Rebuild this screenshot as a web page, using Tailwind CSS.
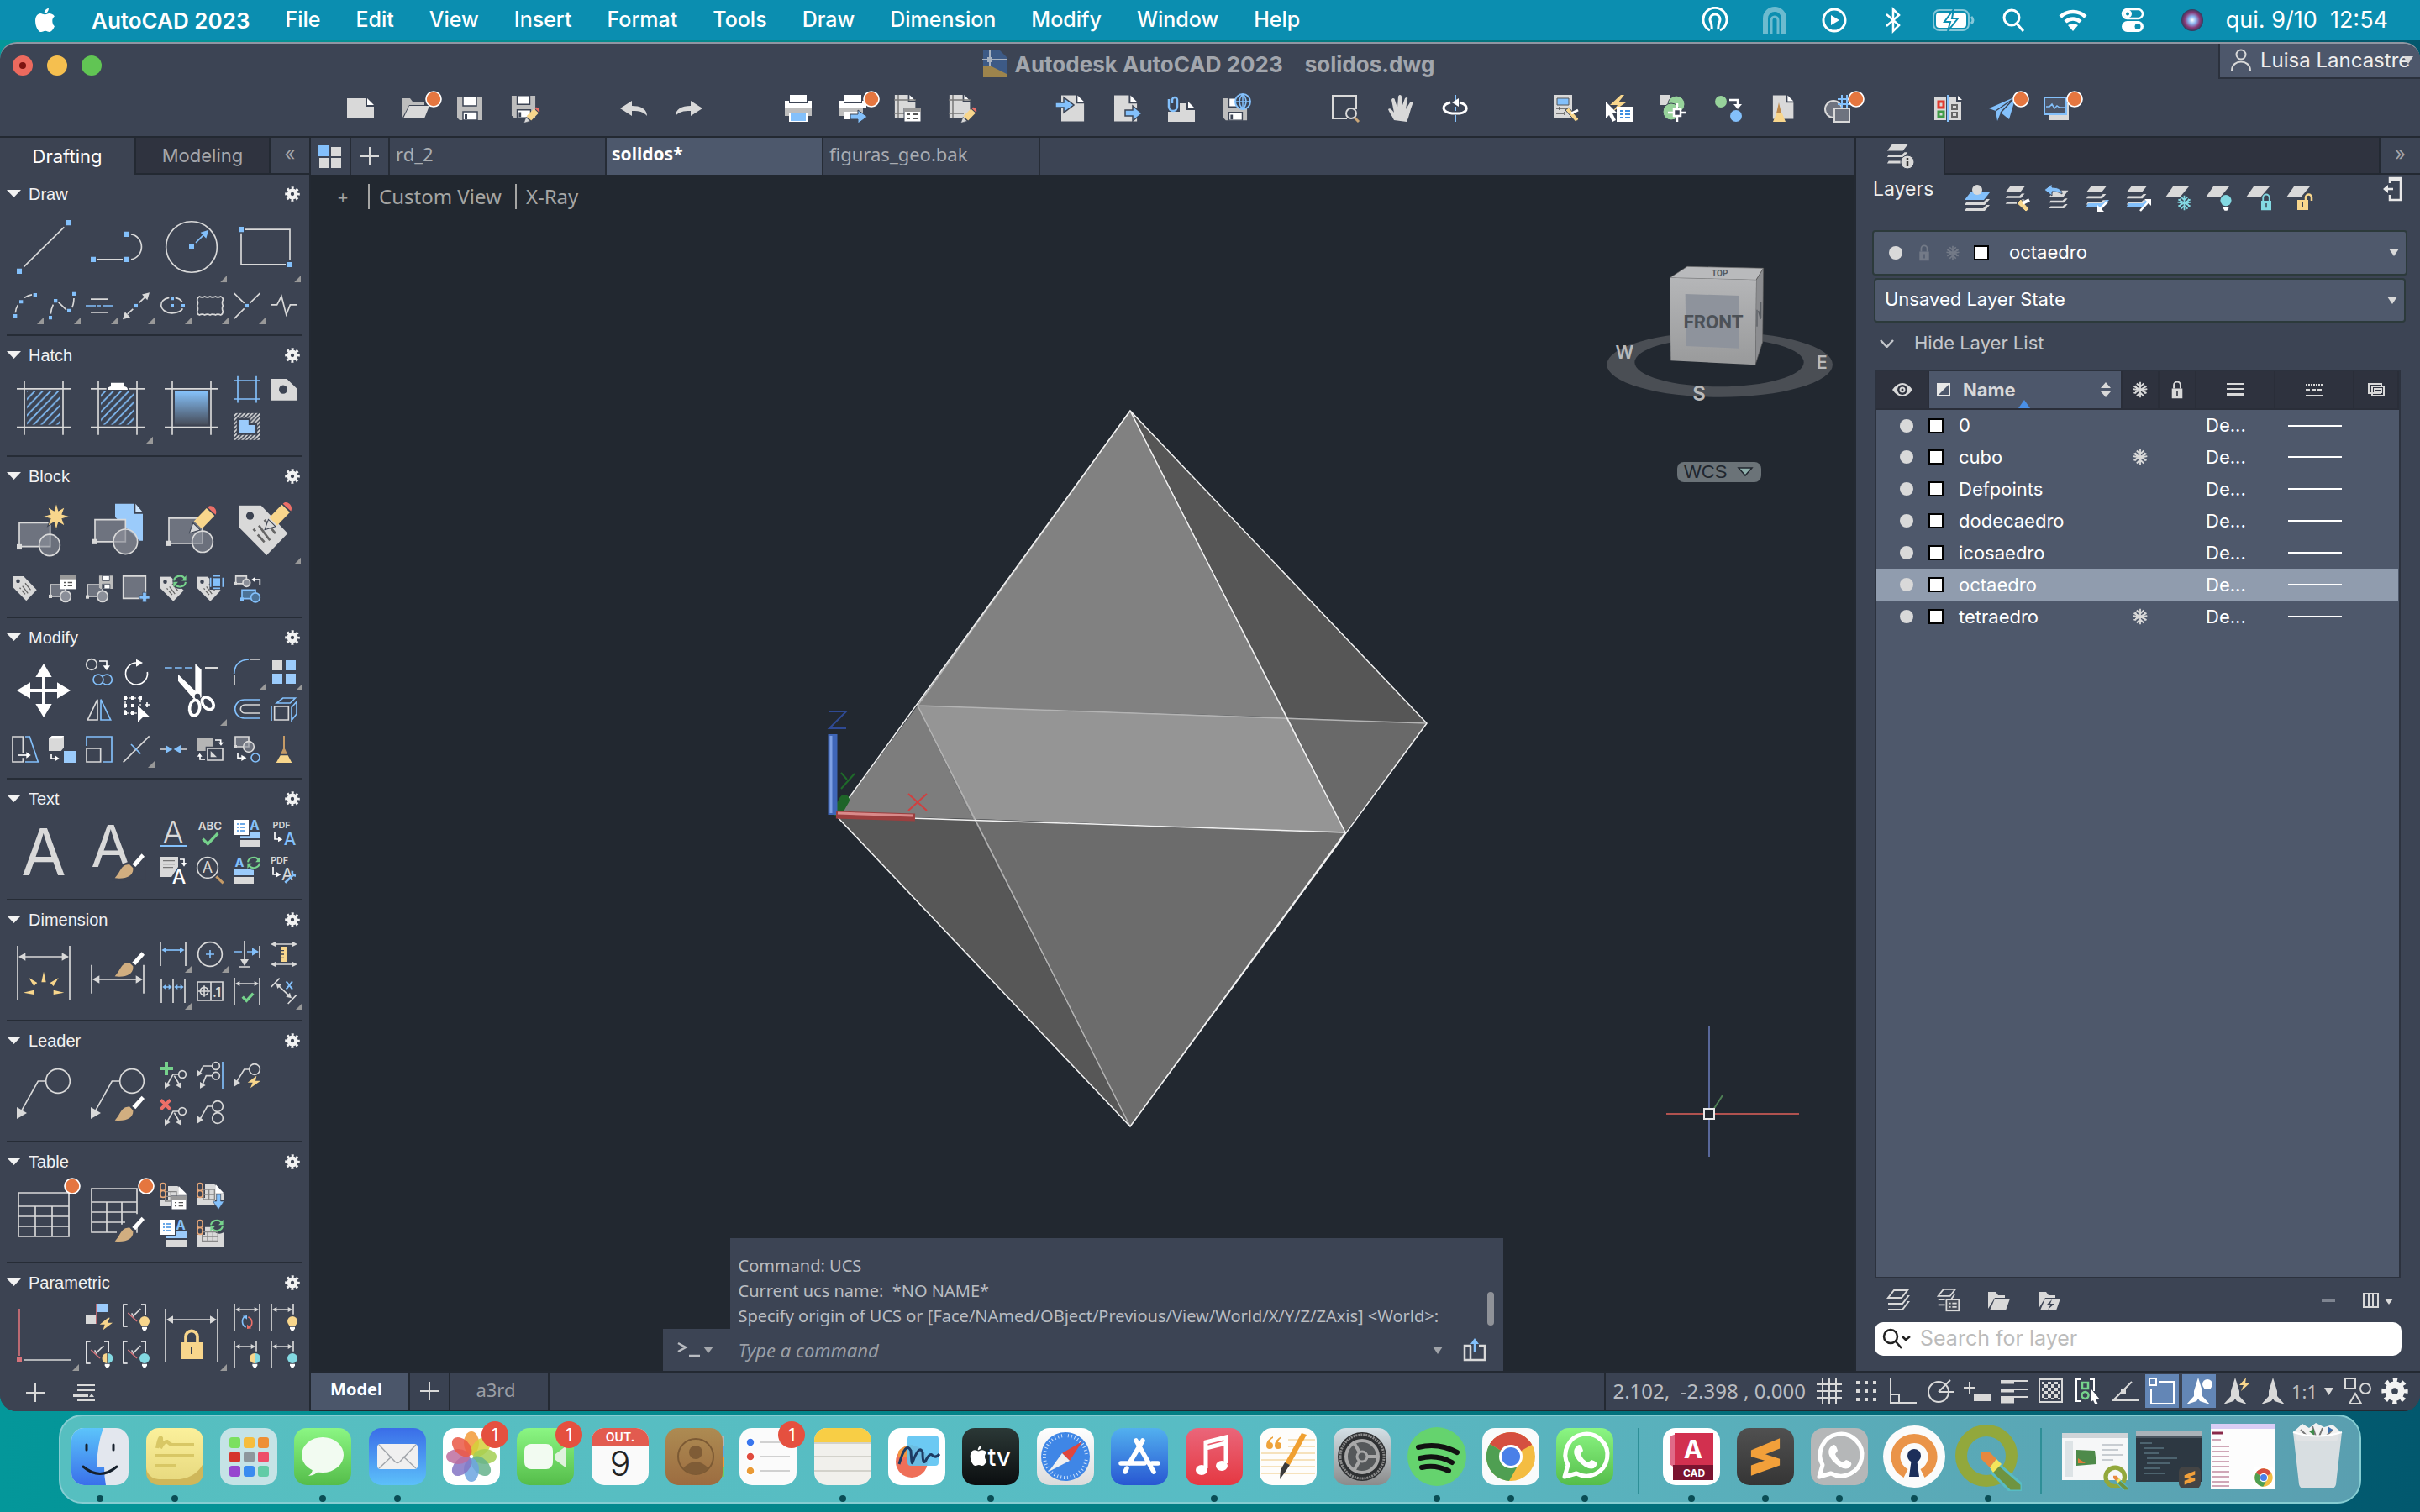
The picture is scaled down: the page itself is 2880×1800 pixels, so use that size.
<!DOCTYPE html>
<html lang="en">
<head>
<meta charset="utf-8">
<title>Autodesk AutoCAD 2023 - solidos.dwg</title>
<script src="https://cdn.jsdelivr.net/npm/@tailwindcss/browser@4"></script>
</head>
<body class="flex h-screen flex-col overflow-hidden bg-linear-to-r from-[#04979a] via-[#037d83] to-[#02586e] font-['Inter',sans-serif] text-white">

<!-- Shared icon parts -->
<svg class="absolute size-0" aria-hidden="true">
  <defs>
    <linearGradient id="gBlue" x1="0" y1="0" x2="0" y2="1"><stop offset="0" stop-color="#86c2fb"/><stop offset="1" stop-color="#474d5a"/></linearGradient>
    <linearGradient id="dGreen" x1="0" y1="0" x2="0" y2="1"><stop offset="0" stop-color="#8bf683"/><stop offset="1" stop-color="#55bd4a"/></linearGradient>
    <linearGradient id="dMail" x1="0" y1="0" x2="0" y2="1"><stop offset="0" stop-color="#3a6de8"/><stop offset="1" stop-color="#5cc0fa"/></linearGradient>
    <linearGradient id="dFind" x1="0" y1="0" x2="0" y2="1"><stop offset="0" stop-color="#5cc4fb"/><stop offset="1" stop-color="#3a70ea"/></linearGradient>
    <linearGradient id="dWhite" x1="0" y1="0" x2="0" y2="1"><stop offset="0" stop-color="#ffffff"/><stop offset="1" stop-color="#dcdcdc"/></linearGradient>
    <linearGradient id="dBlack" x1="0" y1="0" x2="0" y2="1"><stop offset="0" stop-color="#2b3836"/><stop offset="1" stop-color="#0b0e10"/></linearGradient>
    <linearGradient id="dStore" x1="0" y1="0" x2="0" y2="1"><stop offset="0" stop-color="#52b0ef"/><stop offset="1" stop-color="#2857d2"/></linearGradient>
    <linearGradient id="dMusic" x1="0" y1="0" x2="0" y2="1"><stop offset="0" stop-color="#ea667a"/><stop offset="1" stop-color="#e53842"/></linearGradient>
    <linearGradient id="dGray" x1="0" y1="0" x2="0" y2="1"><stop offset="0" stop-color="#d4e0e6"/><stop offset="1" stop-color="#8b8b8b"/></linearGradient>
    <linearGradient id="dBook" x1="0" y1="0" x2="0" y2="1"><stop offset="0" stop-color="#ad8b52"/><stop offset="1" stop-color="#9c6c40"/></linearGradient>
    <linearGradient id="dStick" x1="0" y1="0" x2="0" y2="1"><stop offset="0" stop-color="#fbf09b"/><stop offset="1" stop-color="#e8da80"/></linearGradient>
    <linearGradient id="dSubl" x1="0" y1="0" x2="0" y2="1"><stop offset="0" stop-color="#505050"/><stop offset="1" stop-color="#353535"/></linearGradient>
    <linearGradient id="cubeF" x1="0" y1="0" x2="0" y2="1"><stop offset="0" stop-color="#b5b6b8"/><stop offset="1" stop-color="#999a9b"/></linearGradient>
    <radialGradient id="siri"><stop offset="0" stop-color="#ffffff"/><stop offset=".35" stop-color="#8ab4f0"/><stop offset=".7" stop-color="#8a3a78"/><stop offset="1" stop-color="#333a5c"/></radialGradient>
    <pattern id="diag" width="28" height="28" patternUnits="userSpaceOnUse"><path d="M-7 35L35 -7M-7 7L7 -7M21 35L35 21" stroke="#83c0fb" stroke-width="5" fill="none"/></pattern>
    <pattern id="diagW" width="14" height="14" patternUnits="userSpaceOnUse"><path d="M-3 17L17 -3M-3 3L3 -3M11 17L17 11" stroke="#d9d9d9" stroke-width="5" fill="none"/></pattern>
    <pattern id="chk" width="8" height="8" patternUnits="userSpaceOnUse"><path d="M0 0h4v4H0zM4 4h4v4H4z" fill="#d9d9d9"/></pattern>
  </defs>
  <symbol id="tri" viewBox="0 0 24 24"><path d="M0 24L24 0V24z" fill="#999" stroke="none"/></symbol>
  <symbol id="gear" viewBox="0 0 54 54"><circle cx="27" cy="27" r="13" fill="none" stroke="#f2f2f2" stroke-width="13"/><circle cx="27" cy="27" r="22" fill="none" stroke="#f2f2f2" stroke-width="9" stroke-dasharray="8.64" stroke-dashoffset="4.32"/></symbol>
  <symbol id="brush" viewBox="0 0 110 92"><path d="M64 40L98 3l10 10-32 37z" fill="#fff" stroke="none"/><path d="M2 90C24 66 24 44 47 42l7-1 13 13C70 80 45 95 2 90z" fill="#d1ae80" stroke="none"/></symbol>
  <symbol id="badge" viewBox="0 0 60 60"><circle cx="30" cy="30" r="27" fill="#e5763f" stroke="#fff" stroke-width="5"/></symbol>
  <symbol id="sync" viewBox="0 0 48 44"><path d="M4 20C6 4 30-2 40 12M44 24C42 40 18 46 8 32" fill="none" stroke="#76d28c" stroke-width="6"/><path d="M46 2v18H30zM2 42V24h16z" fill="#76d28c" stroke="none"/></symbol>
  <symbol id="bulbY" viewBox="0 0 36 52"><circle cx="18" cy="18" r="18" fill="#f8d68c" stroke="none"/><path d="M9 38h18v6l-5 7h-8l-5-7z" fill="#fff" stroke="none"/></symbol>
  <symbol id="bulbC" viewBox="0 0 36 52"><circle cx="18" cy="18" r="18" fill="#83d9e2" stroke="none"/><path d="M9 38h18v6l-5 7h-8l-5-7z" fill="#fff" stroke="none"/></symbol>
  <symbol id="bulbH" viewBox="0 0 36 52"><path d="M17 0a18 18 0 0 0 0 36z" fill="#f8d68c" stroke="none"/><path d="M20 0a18 18 0 0 1 0 36z" fill="#83d9e2" stroke="none"/><path d="M9 38h18v6l-5 7h-8l-5-7z" fill="#fff" stroke="none"/></symbol>
  <symbol id="pencil" viewBox="0 0 100 100"><path d="M18 56L62 12 90 38 46 82z" fill="#f8d68c" stroke="none"/><path d="M66 9c10-14 38 4 28 25z" fill="#ec6f68" stroke="none"/><path d="M2 97L15 62 40 86z" fill="#d9d9d9" stroke="#3c4352" stroke-width="3"/></symbol>
  <symbol id="tag" viewBox="0 0 90 90"><path d="M1 1H40L88 50 50 88 1 40z" fill="#d9d9d9" stroke="none"/><circle cx="20" cy="19" r="7" fill="#3c4352" stroke="none"/><path d="M46 26L66 50M36 36L56 62M26 42l4 4M34 52l12 13" stroke="#666" stroke-width="4" fill="none"/></symbol>
  <symbol id="snow" viewBox="0 0 24 24"><path d="M12 1v22M3 7l18 10M3 17L21 7M7 3l5 5 5-5M7 21l5-5 5 5M2 11l6 1-3 5M22 11l-6 1 3 5M5 6l3 6M19 6l-3 6" fill="none" stroke="currentColor" stroke-width="2.200"/></symbol>
  <symbol id="lock" viewBox="0 0 20 28"><path d="M5 12V7a5 5 0 0 1 10 0v5" fill="none" stroke="currentColor" stroke-width="2.500"/><path fill-rule="evenodd" d="M2 12h16v15H2zM9 16v7h2v-7z" fill="currentColor" stroke="none"/></symbol>
  <symbol id="sheets" viewBox="0 0 32 32"><g fill="#d9d9d9" stroke="none"><path d="M9 1h20l-7 9H2zM24 12h4l-5 6H2l2-3h17zM24 20h4l-5 6H2l2-3h17z"/></g></symbol>
  <symbol id="floppy" viewBox="0 0 32 32"><path d="M1 2h30v28H4l-3-3z" fill="#bdbdbd" stroke="none"/><path d="M8 2h16v11H8zM8 20h17v10H8z" fill="#fff" stroke="#3c4454" stroke-width="1.500"/><path d="M10 23h3v6h-3z" fill="#3c4454" stroke="none"/></symbol>
  <symbol id="page" viewBox="0 0 32 32"><path d="M1 0h18v10h10v22H1z" fill="#d9d9d9" stroke="none"/><path d="M21 0l8 8h-8z" fill="#fff" stroke="none"/></symbol>
  <symbol id="wa" viewBox="0 0 68 68"><path d="M10 58l4-14A25 25 0 1 1 24 54z" fill="none" stroke="#fff" stroke-width="5" stroke-linejoin="round"/><path d="M24 22c4-4 6-2 8 5l-3 4c2 5 5 8 9 10l4-3c6 2 8 4 5 8-4 5-12 2-19-5s-9-14-4-19z" fill="#fff"/></symbol>
  <symbol id="chrome" viewBox="0 0 60 60"><circle cx="30" cy="30" r="29" fill="#f4bd42"/><path d="M30 30L5 15A29 29 0 0 1 55 16z" fill="#d54f40"/><path d="M30 30L5 15A29 29 0 0 0 28 59l13-23z" fill="#4f9f52"/><path d="M5 15A29 29 0 0 1 55 16H30z" fill="#d54f40"/><circle cx="30" cy="30" r="14" fill="#fff"/><circle cx="30" cy="30" r="11" fill="#4a80e8"/></symbol>
  <symbol id="subl" viewBox="0 0 40 50"><path d="M2 17L38 2v13L20 22l18 6v8L2 49V36l17-6L2 25z" fill="#f2a03a"/></symbol>
  <symbol id="qgis" viewBox="0 0 80 80"><circle cx="38" cy="38" r="30" fill="none" stroke="#92a83c" stroke-width="14"/><path d="M48 44L80 72v8H66L44 58z" fill="#6f9440" stroke="#58bcc4" stroke-width="3"/><path d="M32 34h10l8 8-8 10-10-10z" fill="#e8883e"/><path d="M50 42l6 6-10 10-4-6z" fill="#f5e55a"/></symbol>
  <symbol id="apple" viewBox="0 0 28 34"><path d="M19 1c0 4-3 7-6 7 0-4 3-7 6-7zM24 18c0-4 3-6 3-6-2-3-5-4-7-4-3 0-4 1.500-6 1.500S10 8 8 8c-4 0-7 4-7 10 0 7 4 15 8 15 2 0 3-1.500 5.500-1.500S18 33 20 33c3 0 6-5 7-8 0 0-3-2-3-7z" fill="#fff"/></symbol>
</svg>

<!-- System menu bar -->
<header class="flex h-12 shrink-0 items-center bg-[#0b8eb0] pl-10 pr-[38px] text-[25px] font-medium">
  <button aria-label="Apple menu" class="mr-[42px]"><svg viewBox="0 0 28 34" class="block h-[30px] w-[27px]"><use href="#apple"/></svg></button>
  <nav aria-label="Application menu" class="flex items-center gap-[42px]">
    <button class="text-[26px] font-semibold">AutoCAD 2023</button>
    <button>File</button><button>Edit</button><button>View</button><button>Insert</button><button>Format</button><button>Tools</button><button>Draw</button><button>Dimension</button><button>Modify</button><button>Window</button><button>Help</button>
  </nav>
  <div class="ml-auto flex items-center fill-none stroke-white stroke-[3px] [&>button]:grid [&>button]:w-[71px] [&>button]:place-items-center [&_svg]:h-8">
    <button aria-label="VPN"><svg viewBox="0 0 32 32"><path d="M10 28a14 14 0 1 1 12 0M12 27c1-7-2-8-2-12a6 6 0 0 1 12 0c0 4-3 5-2 12"/></svg></button>
    <button aria-label="Network"><svg viewBox="0 0 32 32" class="opacity-40"><path stroke-width="6" d="M5 32V14a11 11 0 0 1 22 0v18"/><path d="M12 32V16a4 4 0 0 1 8 0v16"/></svg></button>
    <button aria-label="Now playing"><svg viewBox="0 0 32 32"><circle cx="16" cy="16" r="13"/><path d="M12 10l10 6-10 6z" fill="#fff" stroke="none"/></svg></button>
    <button aria-label="Bluetooth"><svg viewBox="0 0 32 32"><path stroke-width="2.500" d="M7 9l15 13-7 7V3l7 7L7 23"/></svg></button>
    <button aria-label="Battery"><svg viewBox="0 0 52 32" class="w-[52px]"><rect x="2" y="4" width="42" height="24" rx="7" stroke-opacity=".5" stroke-width="2"/><rect x="5" y="7" width="36" height="18" rx="4" fill="#fff" stroke="none"/><path d="M47 12q4 4 0 8" stroke-opacity=".5"/><path d="M26 3L15 18h7l-3 11 12-15h-7z" fill="#fff" stroke="#0b8eb0" stroke-width="2"/></svg></button>
    <button aria-label="Spotlight"><svg viewBox="0 0 32 32"><circle cx="14" cy="13" r="9"/><path d="M20 20l8 9"/></svg></button>
    <button aria-label="Wi-Fi"><svg viewBox="0 0 36 32" class="w-9"><path stroke-width="4.500" d="M3 12a22 22 0 0 1 30 0M9 18a13 13 0 0 1 18 0"/><path d="M18 29l-6-7q6-4 12 0z" fill="#fff" stroke="none"/></svg></button>
    <button aria-label="Control Centre"><svg viewBox="0 0 32 32"><rect x="4" y="3" width="24" height="11" rx="5.500" stroke-width="2.500"/><circle cx="10" cy="8.500" r="3.500"/><rect x="3" y="17" width="26" height="13" rx="6.500" fill="#fff" stroke="none"/><circle cx="22" cy="23.500" r="3.500" fill="#0b8eb0" stroke="none"/></svg></button>
    <button aria-label="Siri"><svg viewBox="0 0 32 32"><circle cx="16" cy="16" r="13" fill="url(#siri)" stroke="none"/></svg></button>
  </div>
  <time class="ml-1 whitespace-pre text-right text-[27px] font-normal">qui. 9/10  12:54</time>
</header>

<!-- AutoCAD window -->
<main class="mt-0.5 flex min-h-0 flex-1 flex-col overflow-hidden rounded-[20px] border-t-2 border-[#9096a2] bg-[#3c4454]">
  <div class="grid h-[52px] shrink-0 grid-cols-[1fr_auto_1fr] items-center">
    <div class="flex gap-[17px] pl-[15px]">
      <button aria-label="Close" class="grid size-6 place-items-center rounded-full bg-[#ec6a5e]"><span class="size-2 rounded-full bg-[#7d1410]"></span></button>
      <button aria-label="Minimise" class="size-6 rounded-full bg-[#f5bf4f]"></button>
      <button aria-label="Zoom" class="size-6 rounded-full bg-[#61c554]"></button>
    </div>
    <h1 class="flex items-center pb-1 pr-1 text-[26px] font-bold text-[#a2a6ad]">
      <svg viewBox="0 0 30 32" class="mr-[9px] h-8 w-[30px]"><path d="M1 0h20l8 8v24H1z" fill="#3d5a86"/><path d="M1 18h8l20 10v4H1z" fill="#9d844c"/><path d="M9 0v18M0 11h29" stroke="#a8b2c0" stroke-width="2"/><rect x="6" y="8" width="6" height="6" fill="#a8b2c0"/></svg>
      <span>Autodesk AutoCAD 2023</span><span class="ml-[26px]">solidos.dwg</span>
    </h1>
    <button class="flex h-[42px] w-[240px] items-center gap-2.5 self-start justify-self-end border-b-2 border-l-2 border-[#2b313d] bg-[#4d576b] pl-3 text-[24px] text-[#eee]">
      <svg viewBox="0 0 26 28" class="h-7 w-[26px] shrink-0 fill-none stroke-[#d9d9d9] stroke-2"><circle cx="13" cy="7" r="5.500"/><path d="M2 26c0-14 22-14 22 0"/></svg>
      <span class="whitespace-nowrap">Luisa Lancastre</span><svg viewBox="0 0 12 10" class="-ml-[18px] h-2.5 w-3 shrink-0"><path d="M0 0h12l-6 9z" fill="#d9d9d9"/></svg>
    </button>
  </div>

  <!-- Quick access toolbar -->
  <div role="toolbar" aria-label="Quick access" class="mb-2 ml-[396px] mr-[399px] grid h-[50px] shrink-0 grid-cols-[repeat(32,minmax(0,1fr))] fill-none stroke-none [&>button]:grid [&>button]:place-items-center [&_svg]:size-8 [&_svg]:overflow-visible">
    <button aria-label="New"><svg viewBox="0 0 32 32"><path d="M0 4h22v10h10v14H0z" fill="#d9d9d9"/><path d="M24 4l8 8h-8z" fill="#fff"/></svg></button>
    <button aria-label="Open"><svg viewBox="0 0 32 32"><path d="M1 4h9l3 4h14v4H9L1 27z" fill="#bdbdbd"/><path d="M9 13h24l-6 15H2z" fill="#d9d9d9"/><use href="#badge" x="28" y="-5" width="20" height="20"/></svg></button>
    <button aria-label="Save"><svg viewBox="0 0 32 32"><use href="#floppy" width="32" height="32"/></svg></button>
    <button aria-label="Save as"><svg viewBox="0 0 32 32"><use href="#floppy" y="-1" width="30" height="30"/><use href="#pencil" x="15" y="14" width="20" height="20"/></svg></button>
    <button aria-label="Undo" class="col-start-6"><svg viewBox="0 0 32 32"><path d="M0 16L14 7v6c11 0 18 4 18 12-4-5-9-6-18-6v6z" fill="#d9d9d9"/></svg></button>
    <button aria-label="Redo"><svg viewBox="0 0 32 32"><path d="M32 16L18 7v6C7 13 0 17 0 25c4-5 9-6 18-6v6z" fill="#d9d9d9"/></svg></button>
    <button aria-label="Plot" class="col-start-9"><svg viewBox="0 0 32 32"><path d="M6 0h20v8H6zM0 7h5v3h22V7h5v8H0z" fill="#fff"/><path d="M0 16h32v9H0z" fill="#bdbdbd"/><path d="M5 21h22v11H5z" fill="#fff"/><path d="M7 22h18v9H7z" fill="#83c0fb"/></svg></button>
    <button aria-label="Batch plot"><svg viewBox="0 0 32 32"><path d="M6 0h20v8H6zM0 7h5v3h22V7h5v8H0z" fill="#fff"/><path d="M0 16h28v9H0z" fill="#bdbdbd"/><path d="M5 20h18v9H5z" fill="#fff"/><path d="M13 23h9v-5l11 8-11 8v-5h-9z" fill="#83c0fb" stroke="#3c4454"/><use href="#badge" x="28" y="-5" width="20" height="20"/></svg></button>
    <button aria-label="Page setup"><svg viewBox="0 0 32 32"><use href="#page" width="28" height="28"/><path d="M0 6h26M0 22h18M5 0v28" stroke="#777" stroke-width="1.500"/><path d="M12 16h20v16H12z" fill="#fff" stroke="#3c4454"/><path d="M12 16h20v4H12z" fill="#999"/><path d="M16 23h3m3 0h6M16 28h3m3 0h6" stroke="#555" stroke-width="2"/></svg></button>
    <button aria-label="Page edit"><svg viewBox="0 0 32 32"><use href="#page" width="28" height="28"/><path d="M0 6h26M0 22h18M5 0v28" stroke="#777" stroke-width="1.500"/><use href="#pencil" x="14" y="14" width="20" height="20"/></svg></button>
    <button aria-label="Import" class="col-start-14"><svg viewBox="0 0 32 32"><use href="#page" x="2" width="31" height="32"/><path d="M-4 9h10V3l12 9-12 9v-6H-4z" fill="#83c0fb" stroke="#3c4454" stroke-width="1.500"/></svg></button>
    <button aria-label="Export"><svg viewBox="0 0 32 32"><use href="#page" width="31" height="32"/><path d="M14 18h9v-5l11 9-11 9v-6h-9z" fill="#83c0fb" stroke="#3c4454" stroke-width="1.500"/></svg></button>
    <button aria-label="Attach"><svg viewBox="0 0 32 32"><path d="M14 10h8v8h10v14H0V20h14z" fill="#d9d9d9"/><path d="M24 8l8 8h-8z" fill="#fff"/><path d="M5 10V6a3 3 0 0 1 6 0v8a5 5 0 0 1-10 0V5" stroke="#83c0fb" stroke-width="2.500"/></svg></button>
    <button aria-label="Save to web"><svg viewBox="0 0 32 32"><use href="#floppy" y="2" width="30" height="30"/><circle cx="24" cy="8" r="9" fill="#3c4454" stroke="#83c0fb" stroke-width="2"/><path d="M15 8h18M24-1v18M24-1q-8 9 0 18M24-1q8 9 0 18" stroke="#83c0fb" stroke-width="1.500"/></svg></button>
    <button aria-label="Zoom window" class="col-start-19"><svg viewBox="0 0 32 32"><path d="M18 28H1V1h28v16" stroke="#d9d9d9" stroke-width="2"/><circle cx="23" cy="22" r="6" stroke="#d9d9d9" stroke-width="2"/><path d="M27 27l5 5" stroke="#c9a678" stroke-width="3"/></svg></button>
    <button aria-label="Pan"><svg viewBox="0 0 32 32"><path d="M8 30C5 24 2 20 1 17c2-2 4 0 7 4L5 6c1-3 4-2 4 0l3 9 1-13c1-3 4-2 4 0v13l4-11c2-2 4-1 3 1l-2 12 5-8c2-2 4 0 3 2-3 7-4 15-7 21z" fill="#d9d9d9"/></svg></button>
    <button aria-label="Orbit"><svg viewBox="0 0 32 32"><path d="M16 0v9M16 14v5M16 24v8" stroke="#83c0fb" stroke-width="2"/><path d="M10 9C-1 12-1 20 12 22h9c11-2 11-10 0-13" stroke="#fff" stroke-width="3"/><path d="M20 4l-8 5 8 5z" fill="#fff"/></svg></button>
    <button aria-label="Tool palettes" class="col-start-23"><svg viewBox="0 0 32 32"><path d="M3 0h22v28H3z" fill="#d9d9d9"/><path d="M7 4h14v8H7z" fill="#83c0fb" stroke="#555"/><path d="M6 16h15M6 22h9M10 14v4M16 20v4" stroke="#555" stroke-width="1.500"/><path d="M17 18l4-3 12 14-4 3z" fill="#f8d68c" stroke="#3c4454"/><path d="M24 22l8-4" stroke="#fff" stroke-width="3"/></svg></button>
    <button aria-label="Quick select"><svg viewBox="0 0 32 32"><path d="M18 0L5 12h9L8 20 24 9h-9l7-9z" fill="#f8d68c"/><path d="M0 8l14 14H8l4 8-4 2-4-8-4 4z" fill="#fff"/><path d="M13 14h19v18H13z" fill="#fff"/><path d="M17 19h4m2 0h6M17 23h4m2 0h6M17 27h4m2 0h6" stroke="#3d8de0" stroke-width="2"/></svg></button>
    <button aria-label="Count"><svg viewBox="0 0 32 32"><path d="M0 0h12v12H0z" fill="#d9d9d9"/><circle cx="19" cy="11" r="10" fill="#97d39b" stroke="#3c4454"/><circle cx="13" cy="20" r="10" fill="#97d39b" stroke="#3c4454"/><path d="M20 10v22M9 21h22" stroke="#fff" stroke-width="2.500"/><rect x="16" y="17" width="8" height="8" fill="#3c4454" stroke="#fff" stroke-width="2.500"/></svg></button>
    <button aria-label="Compare objects"><svg viewBox="0 0 32 32"><circle cx="7" cy="8" r="7" fill="#97d39b"/><path d="M17 6h10v6" stroke="#fff" stroke-width="2.500"/><path d="M22 11h10l-5 6z" fill="#fff"/><circle cx="25" cy="25" r="7" fill="#83c0fb"/></svg></button>
    <button aria-label="Purge"><svg viewBox="0 0 32 32"><use href="#page" x="2" width="28" height="29"/><path d="M10 9l3 13h-6z" fill="#c08a4a"/><path d="M7 22h7l4 10H3z" fill="#f8d68c"/></svg></button>
    <button aria-label="Measure"><svg viewBox="0 0 32 32"><circle cx="10" cy="17" r="10" fill="#6e737f" stroke="#d9d9d9" stroke-width="2"/><path d="M11 16h18v16H11z" fill="#6e737f" stroke="#d9d9d9" stroke-width="2"/><path d="M20 0v16M26 0v16M15 5h16M15 11h16" stroke="#83c0fb" stroke-width="2"/><use href="#badge" x="27" y="-5" width="20" height="20"/></svg></button>
    <button aria-label="DWG compare" class="col-start-30"><svg viewBox="0 0 32 32"><path d="M0 2h14v28H0zM18 2h8v6h6v22H18z" fill="#d9d9d9"/><path d="M28 1l5 5h-5z" fill="#fff"/><path d="M5 8h6v7H5z" stroke="#e03a2f" stroke-width="3"/><path d="M5 20h6v6H5z" stroke="#3f9b46" stroke-width="3"/><path d="M21 12h6v5h-6zM21 21h6v5h-6z" stroke="#666" stroke-width="2"/><path d="M16 0v32" stroke="#83c0fb" stroke-width="2"/></svg></button>
    <button aria-label="Share"><svg viewBox="0 0 32 32"><path d="M0 16L32 2 24 29 14 21 10 31 8 19z" fill="#83c0fb"/><path d="M8 19L30 4 14 21" stroke="#3c4454" stroke-width="1.500"/><use href="#badge" x="28" y="-5" width="20" height="20"/></svg></button>
    <button aria-label="Activity"><svg viewBox="0 0 32 32"><path d="M6 10h24v20H6z" fill="#d9d9d9"/><path d="M1 3h26v20H1z" fill="#4b5568" stroke="#83c0fb" stroke-width="2"/><path d="M3 14h4l3-3 3 5 3-3 3 2h6" stroke="#83c0fb" stroke-width="1.500"/><use href="#badge" x="27" y="-5" width="20" height="20"/></svg></button>
  </div>

  <div class="grid min-h-0 flex-1 grid-cols-[370px_minmax(0,1fr)_673px] grid-rows-[minmax(0,1fr)_48px] border-t-2 border-[#232932]">

    <!-- Tool sets -->
    <aside class="row-span-2 flex min-h-0 flex-col border-r-2 border-[#232932] bg-[#3c4352]">
      <div role="tablist" class="flex h-[44px] shrink-0 text-[22px]">
        <button role="tab" class="w-[160px]">Drafting</button>
        <button role="tab" class="w-[162px] border-x-2 border-b-2 border-[#232932] bg-[#2f333f] text-[#a4a6ab]">Modeling</button>
        <button aria-label="Collapse" class="flex-1 border-b-2 border-[#232932] pb-1 text-[#a4a6ab]">«</button>
      </div>
      <div class="min-h-0 flex-1 overflow-hidden px-2 fill-none stroke-[#d9d9d9] stroke-[5px]">

        <section class="h-48 border-b-2 border-[#262c36]">
          <h2 class="flex h-[42px] items-center pt-[3px] font-['Liberation_Sans',sans-serif] text-[20px] text-[#f2f2f2]"><svg viewBox="0 0 17 9" class="mr-[9px] h-[9px] w-[17px]"><path d="M0 0h17L8.500 9z" fill="#f2f2f2" stroke="none"/></svg>Draw<button aria-label="Draw settings" class="ml-auto mr-[3px]"><svg viewBox="0 0 54 54" class="size-[18px]"><use href="#gear"/></svg></button></h2>
          <div class="grid grid-cols-4 [&_svg]:block">
            <button aria-label="Line"><svg viewBox="24 145 264 256" preserveAspectRatio="none" class="size-[88px]"><path d="M85 342L229 204"/><path d="M60 348h18v18H60zM234 180h18v18h-18z" fill="#83c0fb" stroke="none"/></svg></button>
            <button aria-label="Polyline"><svg viewBox="288 145 264 256" preserveAspectRatio="none" class="size-[88px]"><path d="M348 316h90M468 229a44 44 0 0 1 0 87"/><path d="M324 307h18v18h-18zM444 307h18v18h-18zM444 220h18v18h-18z" fill="#83c0fb" stroke="none"/></svg></button>
            <button aria-label="Circle"><svg viewBox="552 145 264 256" preserveAspectRatio="none" class="size-[88px]"><ellipse cx="684" cy="273" rx="91" ry="88"/><path d="M699 258l30-29" stroke="#83c0fb"/><path d="M675 264h18v18h-18zM745 214l-29 9 20 20z" fill="#83c0fb" stroke="none"/><use href="#tri" x="786" y="372" width="24" height="24"/></svg></button>
            <button aria-label="Rectangle"><svg viewBox="816 145 264 256" preserveAspectRatio="none" class="size-[88px]"><path d="M876 212h159v106M861 226v108h159"/><path d="M852 203h18v18h-18zM1026 325h18v18h-18z" fill="#83c0fb" stroke="none"/><use href="#tri" x="1050" y="372" width="24" height="24"/></svg></button>
          </div>
          <div class="mt-1 grid grid-cols-8 [&_svg]:block">
            <button aria-label="Arc"><svg viewBox="24 412 132 128" preserveAspectRatio="none" class="size-11"><path d="M87 448q13-8 27-10M55 500q1-14 9-26"/><path d="M119 432h13v12h-13zM69 456h13v12H69zM48 505h13v12H48z" fill="#83c0fb" stroke="none"/><use href="#tri" x="132" y="516" width="24" height="24"/></svg></button>
            <button aria-label="Spline"><svg viewBox="156 412 132 128" preserveAspectRatio="none" class="size-11"><path d="M181 504q2-18 9-32M209 464l28 26M257 482q6-10 7-32"/><path d="M174 511h12v12h-12zM192 453h13v12h-13zM240 487h12v12h-12zM258 429h12v12h-12z" fill="#83c0fb" stroke="none"/><use href="#tri" x="264" y="516" width="24" height="24"/></svg></button>
            <button aria-label="Construction line"><svg viewBox="288 412 132 128" preserveAspectRatio="none" class="size-11"><path d="M324 453h60M324 499h60"/><path d="M306 476h36M348 476h12M366 476h36" stroke="#83c0fb"/><use href="#tri" x="396" y="516" width="24" height="24"/></svg></button>
            <button aria-label="Ray"><svg viewBox="420 412 132 128" preserveAspectRatio="none" class="size-11"><path d="M496 466l22-20M475 487l-20 18"/><path d="M534 430l-8 26-19-19zM438 523l8-26 19 19z" fill="#d9d9d9" stroke="none"/><path d="M480 470h12v12h-12z" fill="#83c0fb" stroke="none"/><use href="#tri" x="528" y="516" width="24" height="24"/></svg></button>
            <button aria-label="Ellipse"><svg viewBox="552 412 132 128" preserveAspectRatio="none" class="size-11"><path d="M604 448c-40 6-40 50 10 54 24-2 34-6 38-16M626 448q16 3 24 14"/><path d="M609 444h12v12h-12zM609 470h12v12h-12zM648 470h12v12h-12z" fill="#83c0fb" stroke="none"/><use href="#tri" x="660" y="516" width="24" height="24"/></svg></button>
            <button aria-label="Revision cloud"><svg viewBox="684 412 132 128" preserveAspectRatio="none" class="size-11"><path d="M712 444q9 5 19 0 9 5 19 0 9 5 19 0 9 5 19 0 9 3 8 12-5 9 0 20-5 9 0 20-1 10-8 12-10-5-19 0-10-5-19 0-10-5-19 0-10-5-19 0-8-2-8-12 5-10 0-20 5-10 0-20 0-8 8-12z"/><use href="#tri" x="792" y="516" width="24" height="24"/></svg></button>
            <button aria-label="Point"><svg viewBox="816 412 132 128" preserveAspectRatio="none" class="size-11"><path d="M836 433l36 34M892 467l36-34M872 486l-35 34"/><path d="M876 470h12v12h-12z" fill="#83c0fb" stroke="none"/><use href="#tri" x="924" y="516" width="24" height="24"/></svg></button>
            <button aria-label="Break line"><svg viewBox="948 412 132 128" preserveAspectRatio="none" class="size-11"><path d="M966 473h23l16-30 17 64 14-34h26"/></svg></button>
          </div>
        </section>

        <section class="h-36 border-b-2 border-[#262c36]">
          <h2 class="flex h-[42px] items-center pt-[3px] font-['Liberation_Sans',sans-serif] text-[20px] text-[#f2f2f2]"><svg viewBox="0 0 17 9" class="mr-[9px] h-[9px] w-[17px]"><path d="M0 0h17L8.500 9z" fill="#f2f2f2" stroke="none"/></svg>Hatch<button aria-label="Hatch settings" class="ml-auto mr-[3px]"><svg viewBox="0 0 54 54" class="size-[18px]"><use href="#gear"/></svg></button></h2>
          <div class="grid grid-cols-8 [&_svg]:block">
            <button aria-label="Hatch" class="col-span-2 row-span-2"><svg viewBox="24 703 264 256" preserveAspectRatio="none" class="size-[88px]"><path d="M87 738v185M225 738v185M60 764h192M60 897h192"/><rect x="96" y="772" width="120" height="116" fill="url(#diag)" stroke="none"/></svg></button>
            <button aria-label="Hatch edit" class="col-span-2 row-span-2"><svg viewBox="288 703 264 256" preserveAspectRatio="none" class="size-[88px]"><path d="M351 738v185M489 738v185M324 764h56M462 764h54M324 897h192"/><rect x="360" y="772" width="120" height="116" fill="url(#diag)" stroke="none"/><path d="M396 743h48v12q12 1 12 12h-72q0-11 12-12z" fill="#fff" stroke="none"/><use href="#tri" x="522" y="929" width="24" height="24"/></svg></button>
            <button aria-label="Gradient" class="col-span-2 row-span-2"><svg viewBox="552 703 264 256" preserveAspectRatio="none" class="size-[88px]"><path d="M615 738v185M753 738v185M588 764h192M588 897h192"/><rect x="624" y="772" width="120" height="116" fill="url(#gBlue)" stroke="none"/></svg></button>
            <button aria-label="Boundary"><svg viewBox="816 703 132 128" preserveAspectRatio="none" class="size-11"><path d="M849 720v92M915 720v92M834 735h96M834 799h96" stroke="#83c0fb"/></svg></button>
            <button aria-label="Region"><svg viewBox="948 703 132 128" preserveAspectRatio="none" class="size-11"><path d="M966 729h58l38 36v39h-96z" fill="#d9d9d9" stroke="none"/><circle cx="1011" cy="766" r="15" fill="#3c4352" stroke="none"/></svg></button>
            <button aria-label="Wipeout"><svg viewBox="816 831 132 128" preserveAspectRatio="none" class="size-11"><rect x="834" y="848" width="96" height="93" fill="url(#diagW)" stroke="none"/><path d="M849 868h42v18h24v34h-66z" fill="#9bcbfb" stroke="#3c4352" stroke-width="7"/></svg></button>
          </div>
        </section>

        <section class="h-48 border-b-2 border-[#262c36]">
          <h2 class="flex h-[42px] items-center pt-[3px] font-['Liberation_Sans',sans-serif] text-[20px] text-[#f2f2f2]"><svg viewBox="0 0 17 9" class="mr-[9px] h-[9px] w-[17px]"><path d="M0 0h17L8.500 9z" fill="#f2f2f2" stroke="none"/></svg>Block<button aria-label="Block settings" class="ml-auto mr-[3px]"><svg viewBox="0 0 54 54" class="size-[18px]"><use href="#gear"/></svg></button></h2>
          <div class="grid grid-cols-4 [&_svg]:block">
            <button aria-label="Create block"><svg viewBox="24 1121 264 256" preserveAspectRatio="none" class="size-[88px]"><path d="M69 1227h110v82H69z" fill="#6e737f"/><circle cx="177" cy="1304" r="37" fill="#8b8f99" fill-opacity=".6"/><path d="M60 1301h18v18H60z" fill="#d9d9d9" stroke="none"/><path d="M201 1157l8 28 23-14-10 26 28 8-28 8 10 26-23-14-8 28-8-28-23 14 10-26-28-8 28-8-10-26 23 14z" fill="#f8d68c" stroke="#3c4352" stroke-width="3"/></svg></button>
            <button aria-label="Insert block"><svg viewBox="288 1121 264 256" preserveAspectRatio="none" class="size-[88px]"><path d="M411 1161h66v35h33v93h-12l-87-82z" fill="#9bcbfb" stroke="none"/><path d="M484 1161l26 30h-26z" fill="#cfe6fd" stroke="none"/><path d="M339 1216h109v76H339z" fill="#6e737f"/><circle cx="448" cy="1292" r="43" fill="#8b8f99" fill-opacity=".7"/><path d="M330 1283h18v18h-18z" fill="#d9d9d9" stroke="none"/></svg></button>
            <button aria-label="Edit block"><svg viewBox="552 1121 264 256" preserveAspectRatio="none" class="size-[88px]"><path d="M603 1211h120v87H603z" fill="#6e737f"/><circle cx="723" cy="1292" r="37" fill="#8b8f99" fill-opacity=".6"/><path d="M594 1289h18v18h-18z" fill="#d9d9d9" stroke="none"/><use href="#pencil" x="673" y="1164" width="104" height="102"/></svg></button>
            <button aria-label="Edit attributes"><svg viewBox="816 1121 264 256" preserveAspectRatio="none" class="size-[88px]"><use href="#tag" x="850" y="1165" width="184" height="178"/><use href="#pencil" x="942" y="1152" width="104" height="102"/><use href="#tri" x="1050" y="1347" width="24" height="24"/></svg></button>
          </div>
          <div class="mt-1 grid grid-cols-8 [&_svg]:block">
            <button aria-label="Define attribute"><svg viewBox="24 1385 132 128" preserveAspectRatio="none" class="size-11"><use href="#tag" x="44" y="1407" width="90" height="88"/></svg></button>
            <button aria-label="Block properties"><svg viewBox="156 1385 132 128" preserveAspectRatio="none" class="size-11"><path d="M180 1438h54v40h-54z" fill="#6e737f"/><circle cx="234" cy="1478" r="19" fill="#8b8f99"/><path d="M174 1472h12v12h-12z" fill="#d9d9d9" stroke="none"/><path d="M216 1405h54v48h-54z" fill="#fff" stroke="none"/><path d="M216 1405h54v14h-54z" fill="#999" stroke="none"/><path d="M228 1430h6m8 0h16M228 1441h6m8 0h16" stroke="#555" stroke-width="4"/></svg></button>
            <button aria-label="Write block"><svg viewBox="288 1385 132 128" preserveAspectRatio="none" class="size-11"><path d="M312 1438h54v40h-54z" fill="#6e737f"/><circle cx="366" cy="1478" r="19" fill="#8b8f99"/><path d="M306 1474h12v12h-12z" fill="#d9d9d9" stroke="none"/><use href="#floppy" x="352" y="1403" width="52" height="52"/></svg></button>
            <button aria-label="Base point"><svg viewBox="420 1385 132 128" preserveAspectRatio="none" class="size-11"><path d="M440 1408h80v77h-80z" fill="#6e737f"/><path d="M509 1464h14v11h11v12h-11v11h-14v-11h-11v-12h11z" fill="#83c0fb" stroke="#3c4352" stroke-width="2"/></svg></button>
            <button aria-label="Sync attributes"><svg viewBox="552 1385 132 128" preserveAspectRatio="none" class="size-11"><use href="#tag" x="569" y="1409" width="90" height="88"/><circle cx="642" cy="1426" r="26" fill="#3c4352" stroke="none"/><use href="#sync" x="617" y="1403" width="50" height="46"/></svg></button>
            <button aria-label="Attribute manager"><svg viewBox="684 1385 132 128" preserveAspectRatio="none" class="size-11"><use href="#tag" x="701" y="1409" width="90" height="88"/><path d="M748 1403h52v52h-52z" fill="#3c4352" stroke="none"/><path d="M762 1415h24v28h-24z" fill="#83c0fb" stroke="none"/><path d="M752 1413v32M796 1413v32M762 1407h24M762 1450h24" stroke="#83c0fb"/></svg></button>
            <button aria-label="Replace block"><svg viewBox="816 1385 132 128" preserveAspectRatio="none" class="size-11"><path d="M842 1408h38v26h-38z" fill="#6e737f"/><circle cx="880" cy="1431" r="13" fill="#8b8f99"/><path d="M834 1428h12v12h-12z" fill="#d9d9d9" stroke="none"/><path d="M928 1438v-18h-18" stroke="#fff"/><path d="M898 1420l14-10v20z" fill="#fff" stroke="none"/><path d="M864 1456h48v30h-48z" fill="#4c7296" stroke="#83c0fb"/><circle cx="912" cy="1482" r="16" fill="#4c7296" stroke="#83c0fb"/><path d="M858 1482h12v12h-12z" fill="#83c0fb" stroke="none"/></svg></button>
          </div>
        </section>

        <section class="h-48 border-b-2 border-[#262c36]">
          <h2 class="flex h-[42px] items-center pt-[3px] font-['Liberation_Sans',sans-serif] text-[20px] text-[#f2f2f2]"><svg viewBox="0 0 17 9" class="mr-[9px] h-[9px] w-[17px]"><path d="M0 0h17L8.500 9z" fill="#f2f2f2" stroke="none"/></svg>Modify<button aria-label="Modify settings" class="ml-auto mr-[3px]"><svg viewBox="0 0 54 54" class="size-[18px]"><use href="#gear"/></svg></button></h2>
          <div class="grid grid-cols-8 [&_svg]:block">
            <button aria-label="Move" class="col-span-2 row-span-2"><svg viewBox="24 174 264 264" class="size-[88px]"><path d="M156 240v132M90 306h132" stroke="#fff" stroke-width="12"/><path d="M156 210l29 48h-58zM156 402l29-48h-58zM60 306l48-29v58zM252 306l-48-29v58z" fill="#fff" stroke="none"/></svg></button>
            <button aria-label="Copy"><svg viewBox="288 174 132 132" class="size-11"><circle cx="327" cy="213" r="19"/><circle cx="382" cy="267" r="18" stroke="#83c0fb"/><circle cx="351" cy="267" r="23" fill="#3c4352" stroke="none"/><circle cx="351" cy="267" r="18" stroke="#83c0fb"/><path d="M354 201h27v20" stroke="#fff"/><path d="M368 217h25l-12 18z" fill="#fff" stroke="none"/></svg></button>
            <button aria-label="Rotate"><svg viewBox="420 174 132 132" class="size-11"><path d="M486 207a39 39 0 1 0 40 33" stroke="#fff"/><path d="M486 194l24 13-24 14z" fill="#fff" stroke="none"/></svg></button>
            <button aria-label="Trim" class="col-span-2 row-span-2"><svg viewBox="552 174 264 264" class="size-[88px]"><path d="M588 225h96" stroke="#83c0fb" stroke-dasharray="26 10"/><path d="M732 225h48" stroke-width="6"/><path d="M697 210l22 22v98l-22 10zM636 248l80 78-16 20-64-74z" fill="#fff" stroke="none"/><ellipse cx="695" cy="368" rx="18" ry="28" transform="rotate(8 695 368)" stroke="#fff" stroke-width="11"/><ellipse cx="742" cy="352" rx="17" ry="25" transform="rotate(-40 742 352)" stroke="#fff" stroke-width="11"/><circle cx="705" cy="327" r="10" fill="#3c4352" stroke="none"/><use href="#tri" x="786" y="408" width="24" height="24"/></svg></button>
            <button aria-label="Fillet"><svg viewBox="816 174 132 132" class="size-11"><path d="M836 246q2-48 52-51" stroke="#83c0fb"/><path d="M894 195h36M837 252v36"/><use href="#tri" x="924" y="282" width="24" height="24"/></svg></button>
            <button aria-label="Array"><svg viewBox="948 174 132 132" class="size-11"><path d="M972 198h36v36h-36z" fill="#d9d9d9" stroke="none"/><path d="M1020 198h36v36h-36zM972 246h36v36h-36zM1020 246h36v36h-36z" fill="#9bcbfb" stroke="none"/><use href="#tri" x="1056" y="282" width="24" height="24"/></svg></button>
            <button aria-label="Mirror"><svg viewBox="288 306 132 132" class="size-11"><path d="M348 338v73h-35z"/><path d="M360 338v73h35z" stroke="#83c0fb"/></svg></button>
            <button aria-label="Stretch selection"><svg viewBox="420 306 132 132" class="size-11"><path d="M447 333h54v54h-54z" stroke-dasharray="9 6"/><path d="M441 327h12v12h-12zM468 327h12v12h-12zM495 327h12v12h-12zM441 354h12v12h-12zM441 381h12v12h-12zM468 381h12v12h-12zM468 354h12v12h-12z" fill="#fff" stroke="none"/><path d="M516 357h18M525 348v18" stroke="#fff"/><path d="M492 360l42 40h-22l-20 19z" fill="#fff" stroke="none"/></svg></button>
            <button aria-label="Offset"><svg viewBox="816 306 132 132" class="size-11"><path d="M930 339h-58a33 33 0 0 0 0 66h58" stroke="#83c0fb"/><path d="M930 357h-56a15 15 0 0 0 0 30h56"/></svg></button>
            <button aria-label="Extrude"><svg viewBox="948 306 132 132" class="size-11"><path d="M980 363h50v48h-50z"/><path d="M969 360v54M988 351l22-18h44l-18 18zM1041 366l18-20v44l-18 22z" stroke="#83c0fb"/></svg></button>
          </div>
          <div class="mt-1 grid grid-cols-8 [&_svg]:block">
            <button aria-label="Stretch"><svg viewBox="24 450 132 132" class="size-11"><path d="M82 528v-57H45v90h37v-14"/><path d="M90 471h16l30 90H90" stroke="#83c0fb"/><path d="M66 537h30" stroke="#fff"/><path d="M94 526l16 11-16 11z" fill="#fff" stroke="none"/></svg></button>
            <button aria-label="3D move"><svg viewBox="156 450 132 132" class="size-11"><path d="M174 478l12-10h42v42l-10 12h-44z" fill="#d9d9d9" stroke="none"/><path d="M174 478l12-10h42l-10 10z" fill="#fff" stroke="none"/><path d="M228 522h42v42h-42z" fill="#9bcbfb" stroke="none"/><path d="M183 534v15h14" stroke="#fff"/><path d="M196 538l16 11-16 10z" fill="#fff" stroke="none"/></svg></button>
            <button aria-label="Scale"><svg viewBox="288 450 132 132" class="size-11"><path d="M309 504v-33h90v90h-33" stroke="#83c0fb"/><path d="M309 513h50v48h-50z"/></svg></button>
            <button aria-label="Break"><svg viewBox="420 450 132 132" class="size-11"><path d="M533 469L440 562"/><path d="M468 498l34 34" stroke="#83c0fb"/><use href="#tri" x="528" y="558" width="24" height="24"/></svg></button>
            <button aria-label="Join"><svg viewBox="552 450 132 132" class="size-11"><path d="M570 516h22M644 516h22"/><path d="M591 501l25 15-25 15zM645 501l-25 15 25 15z" fill="#83c0fb" stroke="none"/></svg></button>
            <button aria-label="Draw order"><svg viewBox="684 450 132 132" class="size-11"><path d="M702 474h60v32h-28v16h-32z" fill="#b5b5b5" stroke="none"/><path d="M741 513h54v42h-54z"/><path d="M752 522v22h22z" fill="#d9d9d9" stroke="none"/><path d="M768 483h20v10M732 552h-18v-12" stroke="#fff"/><path d="M780 491h18l-9 12zM704 542h18l-9-12z" fill="#fff" stroke="none"/></svg></button>
            <button aria-label="Explode"><svg viewBox="816 450 132 132" class="size-11"><path d="M840 471h48v36h-48z" fill="#6e737f"/><circle cx="888" cy="507" r="19" fill="#8b8f99" fill-opacity=".6"/><path d="M834 501h12v12h-12z" fill="#d9d9d9" stroke="none"/><path d="M849 528v19h14" stroke="#fff"/><path d="M862 536l18 11-18 11z" fill="#fff" stroke="none"/><circle cx="912" cy="546" r="15" stroke="#83c0fb"/></svg></button>
            <button aria-label="Clean up"><svg viewBox="948 450 132 132" class="size-11"><path d="M1014 468v50" stroke="#c49a66" stroke-width="6"/><path d="M1010 515h8l8 18h-24z" fill="#c49a66" stroke="none"/><path d="M1001 538h27l14 26h-56z" fill="#f8d68c" stroke="none"/></svg></button>
          </div>
        </section>

        <section class="h-36 border-b-2 border-[#262c36]">
          <h2 class="flex h-[42px] items-center pt-[3px] font-['Liberation_Sans',sans-serif] text-[20px] text-[#f2f2f2]"><svg viewBox="0 0 17 9" class="mr-[9px] h-[9px] w-[17px]"><path d="M0 0h17L8.500 9z" fill="#f2f2f2" stroke="none"/></svg>Text<button aria-label="Text settings" class="ml-auto mr-[3px]"><svg viewBox="0 0 54 54" class="size-[18px]"><use href="#gear"/></svg></button></h2>
          <div class="grid grid-cols-8 [&_svg]:block [&_svg]:overflow-visible [&_text]:stroke-none">
            <button aria-label="Multiline text" class="col-span-2 row-span-2"><svg viewBox="24 750 264 264" class="size-[88px]"><text x="156" y="966" text-anchor="middle" font-size="232" font-weight="400" fill="#d9d9d9">A</text></svg></button>
            <button aria-label="Text style" class="col-span-2 row-span-2"><svg viewBox="288 750 264 264" class="size-[88px]"><text x="396" y="936" text-anchor="middle" font-size="206" font-weight="400" fill="#d9d9d9">A</text><path d="M400 985l40-60 30-12 50-30v100z" fill="#3c4352" stroke="none"/><use href="#brush" x="408" y="886" width="110" height="92"/></svg></button>
            <button aria-label="Single line text"><svg viewBox="552 750 132 132" class="size-11"><text x="618" y="851" text-anchor="middle" font-size="112" font-weight="300" fill="#d9d9d9">A</text><path d="M570 861h96" stroke="#83c0fb" stroke-width="6"/></svg></button>
            <button aria-label="Spelling"><svg viewBox="684 750 132 132" class="size-11"><text x="750" y="804" text-anchor="middle" font-size="40" font-weight="600" fill="#d9d9d9">ABC</text><path d="M724 836l18 18 36-38" stroke="#76d28c" stroke-width="10"/></svg></button>
            <button aria-label="Fields"><svg viewBox="816 750 132 132" class="size-11"><path d="M834 768h54v54h-54z" fill="#fff" stroke="none"/><path d="M846 783h6m6 0h18M846 795h6m6 0h18M846 807h6m6 0h18" stroke="#3d8de0" stroke-width="4"/><path d="M892 810h38v24h-72v-8h34z" fill="#9bcbfb" stroke="none"/><path d="M858 840h72v24h-72z" fill="#d9d9d9" stroke="none"/><text x="909" y="804" text-anchor="middle" font-size="46" font-weight="700" fill="#83c0fb">A</text></svg></button>
            <button aria-label="PDF text"><svg viewBox="948 750 132 132" class="size-11"><text x="1005" y="797" text-anchor="middle" font-size="32" font-weight="600" fill="#d9d9d9">PDF</text><path d="M981 810v27h14" stroke="#fff"/><path d="M993 828l16 10-16 9z" fill="#fff" stroke="none"/><text x="1035" y="857" text-anchor="middle" font-size="62" font-weight="500" fill="#83c0fb">A</text></svg></button>
            <button aria-label="Convert to text"><svg viewBox="552 882 132 132" class="size-11"><path d="M570 900h66v36l-24 36h-42z" fill="#d9d9d9" stroke="none"/><path d="M582 914h42M582 926h42M582 938h36" stroke="#777" stroke-width="4"/><path d="M642 909h15v14" stroke="#fff"/><path d="M648 921h18l-9 14z" fill="#fff" stroke="none"/><text x="639" y="995" text-anchor="middle" font-size="70" font-weight="500" fill="#fff">A</text></svg></button>
            <button aria-label="Find text"><svg viewBox="684 882 132 132" class="size-11"><circle cx="741" cy="939" r="37"/><text x="741" y="958" text-anchor="middle" font-size="54" fill="#d9d9d9">A</text><path d="M772 970l25 24" stroke="#c49a66" stroke-width="9"/></svg></button>
            <button aria-label="Update fields"><svg viewBox="816 882 132 132" class="size-11"><text x="855" y="935" text-anchor="middle" font-size="44" font-weight="700" fill="#83c0fb">A</text><path d="M834 942h72v24h-72z" fill="#9bcbfb" stroke="none"/><path d="M834 972h72v24h-72z" fill="#d9d9d9" stroke="none"/><circle cx="906" cy="921" r="26" fill="#3c4352" stroke="none"/><use href="#sync" x="881" y="898" width="50" height="46"/></svg></button>
            <button aria-label="PDF settings"><svg viewBox="948 882 132 132" class="size-11"><text x="998" y="924" text-anchor="middle" font-size="32" font-weight="600" fill="#d9d9d9">PDF</text><path d="M975 936v27h14" stroke="#fff"/><path d="M987 954l16 10-16 9z" fill="#fff" stroke="none"/><text x="1026" y="984" text-anchor="middle" font-size="60" fill="#d9d9d9">A</text><path d="M1018 992l30-28M1044 950q-4 16 12 18" stroke="#83c0fb" stroke-width="8"/></svg></button>
          </div>
        </section>

        <section class="h-36 border-b-2 border-[#262c36]">
          <h2 class="flex h-[42px] items-center pt-[3px] font-['Liberation_Sans',sans-serif] text-[20px] text-[#f2f2f2]"><svg viewBox="0 0 17 9" class="mr-[9px] h-[9px] w-[17px]"><path d="M0 0h17L8.500 9z" fill="#f2f2f2" stroke="none"/></svg>Dimension<button aria-label="Dimension settings" class="ml-auto mr-[3px]"><svg viewBox="0 0 54 54" class="size-[18px]"><use href="#gear"/></svg></button></h2>
          <div class="grid grid-cols-8 [&_svg]:block">
            <button aria-label="Dimension" class="col-span-2 row-span-2"><svg viewBox="24 1182 264 264" class="size-[88px]"><path d="M63 1218v192M249 1218v192M80 1257h150"/><path d="M66 1257l25-14v28zM246 1257l-25-14v28z" fill="#d9d9d9" stroke="none"/><path d="M156 1310l8 38h-16zM103 1332l30 18-12 12zM209 1332l-30 18 12 12zM83 1385l38-9v16zM229 1385l-38-9v16z" fill="#f8d68c" stroke="none"/></svg></button>
            <button aria-label="Dimension style" class="col-span-2 row-span-2"><svg viewBox="288 1182 264 264" class="size-[88px]"><path d="M327 1286v102M513 1286v102M344 1338h150"/><path d="M330 1338l25-14v28zM510 1338l-25-14v28z" fill="#d9d9d9" stroke="none"/><use href="#brush" x="408" y="1237" width="110" height="92"/></svg></button>
            <button aria-label="Linear"><svg viewBox="552 1182 132 132" class="size-11"><path d="M573 1206v84M663 1206v84"/><path d="M588 1233h60" stroke="#83c0fb"/><path d="M577 1233l17-10v20zM659 1233l-17-10v20z" fill="#83c0fb" stroke="none"/><use href="#tri" x="660" y="1290" width="24" height="24"/></svg></button>
            <button aria-label="Center mark"><svg viewBox="684 1182 132 132" class="size-11"><circle cx="750" cy="1248" r="43"/><path d="M735 1248h30M750 1233v30" stroke="#83c0fb"/><use href="#tri" x="792" y="1290" width="24" height="24"/></svg></button>
            <button aria-label="Ordinate"><svg viewBox="816 1182 132 132" class="size-11"><path d="M873 1200v70M852 1293h42M927 1218v42"/><path d="M858 1266h30l-15 24z" fill="#d9d9d9" stroke="none"/><path d="M834 1239h30M882 1239h22" stroke="#83c0fb"/><path d="M900 1225l24 14-24 14z" fill="#83c0fb" stroke="none"/></svg></button>
            <button aria-label="Dimension space"><svg viewBox="948 1182 132 132" class="size-11"><path d="M975 1212h78M975 1284h78"/><path d="M966 1212l18-9v18zM1062 1212l-18-9v18zM966 1284l18-9v18zM1062 1284l-18-9v18z" fill="#d9d9d9" stroke="none"/><path d="M1002 1221h24v54h-24z" fill="#f8d68c" stroke="none"/><path d="M1002 1235h12M1002 1248h12M1002 1261h12" stroke="#3c4352" stroke-width="4"/></svg></button>
            <button aria-label="Continue"><svg viewBox="552 1314 132 132" class="size-11"><path d="M576 1338v84M618 1338v84M660 1338v84"/><path d="M588 1365h18M630 1365h18" stroke="#83c0fb"/><path d="M580 1365l12-9v18zM614 1365l-12-9v18zM622 1365l12-9v18zM656 1365l-12-9v18z" fill="#83c0fb" stroke="none"/><use href="#tri" x="660" y="1422" width="24" height="24"/></svg></button>
            <button aria-label="Tolerance"><svg viewBox="684 1314 132 132" class="size-11"><path d="M705 1347h90v66h-90zM753 1347v66"/><circle cx="729" cy="1380" r="14"/><path d="M708 1380h42M729 1360v40"/><text x="774" y="1400" text-anchor="middle" font-size="46" font-weight="600" fill="#d9d9d9" stroke="none">.1</text></svg></button>
            <button aria-label="Inspect"><svg viewBox="816 1314 132 132" class="size-11"><path d="M837 1332v96M927 1332v96M852 1353h60"/><path d="M840 1353l16-9v18zM924 1353l-16-9v18z" fill="#d9d9d9" stroke="none"/><path d="M866 1400l14 14 24-26" stroke="#76d28c" stroke-width="10"/></svg></button>
            <button aria-label="Oblique"><svg viewBox="948 1314 132 132" class="size-11"><path d="M968 1365l30-31M1028 1425l30-31M994 1360l38 36"/><path d="M985 1351l20 5-14 15zM1041 1405l-20-5 14-15z" fill="#d9d9d9" stroke="none"/><path d="M1022 1345l22 28M1044 1345l-22 28" stroke="#83c0fb" stroke-width="6"/><use href="#tri" x="1056" y="1422" width="24" height="24"/></svg></button>
          </div>
        </section>

        <section class="h-36 border-b-2 border-[#262c36]">
          <h2 class="flex h-[42px] items-center pt-[3px] font-['Liberation_Sans',sans-serif] text-[20px] text-[#f2f2f2]"><svg viewBox="0 0 17 9" class="mr-[9px] h-[9px] w-[17px]"><path d="M0 0h17L8.500 9z" fill="#f2f2f2" stroke="none"/></svg>Leader<button aria-label="Leader settings" class="ml-auto mr-[3px]"><svg viewBox="0 0 54 54" class="size-[18px]"><use href="#gear"/></svg></button></h2>
          <div class="grid grid-cols-8 [&_svg]:block">
            <button aria-label="Leader" class="col-span-2 row-span-2"><svg viewBox="24 144 264 264" class="size-[88px]"><circle cx="207" cy="231" r="43"/><path d="M162 231h-26l-58 104"/><path d="M60 324v42l36-21z" fill="#d9d9d9" stroke="none"/></svg></button>
            <button aria-label="Leader style" class="col-span-2 row-span-2"><svg viewBox="288 144 264 264" class="size-[88px]"><circle cx="471" cy="231" r="43"/><path d="M426 231h-26l-58 104"/><path d="M324 324v42l36-21z" fill="#d9d9d9" stroke="none"/><use href="#brush" x="408" y="281" width="110" height="92"/></svg></button>
            <button aria-label="Add leader"><svg viewBox="552 144 132 132" class="size-11"><path d="M594 162v48M570 186h48" stroke="#76d28c" stroke-width="12"/><circle cx="651" cy="207" r="13"/><path d="M636 207h-18l-22 38M622 212l20 34"/><path d="M588 234v24l20-12zM648 234v24l-20-12z" fill="#d9d9d9" stroke="none"/></svg></button>
            <button aria-label="Align leaders"><svg viewBox="684 144 132 132" class="size-11"><circle cx="771" cy="177" r="13"/><circle cx="771" cy="212" r="13"/><path d="M756 177h-30l-14 28M756 212h-20l-14 34"/><path d="M702 190v26l20-12zM714 234v24l20-12z" fill="#d9d9d9" stroke="none"/><path d="M795 162v96" stroke="#83c0fb"/></svg></button>
            <button aria-label="Collect leaders"><svg viewBox="816 144 132 132" class="size-11"><circle cx="909" cy="189" r="19"/><path d="M890 189h-18l-28 46"/><path d="M834 222v30l24-15z" fill="#d9d9d9" stroke="none"/><path d="M916 212l-32 24h18l-8 20 36-26h-18z" fill="#f8d68c" stroke="none"/></svg></button>
            <button aria-label="Remove leader" class="col-start-5"><svg viewBox="552 276 132 132" class="size-11"><path d="M574 298l34 34M608 298l-34 34" stroke="#ec6f68" stroke-width="12"/><circle cx="651" cy="339" r="13"/><path d="M636 339h-18l-22 38M622 344l20 34"/><path d="M588 366v24l20-12zM648 366v24l-20-12z" fill="#d9d9d9" stroke="none"/></svg></button>
            <button aria-label="Merge leaders"><svg viewBox="684 276 132 132" class="size-11"><circle cx="777" cy="321" r="19"/><circle cx="777" cy="363" r="19"/><path d="M758 321h-18l-26 46"/><path d="M702 354v30l24-15z" fill="#d9d9d9" stroke="none"/></svg></button>
          </div>
        </section>

        <section class="h-36 border-b-2 border-[#262c36]">
          <h2 class="flex h-[42px] items-center pt-[3px] font-['Liberation_Sans',sans-serif] text-[20px] text-[#f2f2f2]"><svg viewBox="0 0 17 9" class="mr-[9px] h-[9px] w-[17px]"><path d="M0 0h17L8.500 9z" fill="#f2f2f2" stroke="none"/></svg>Table<button aria-label="Table settings" class="ml-auto mr-[3px]"><svg viewBox="0 0 54 54" class="size-[18px]"><use href="#gear"/></svg></button></h2>
          <div class="grid grid-cols-8 [&_svg]:block [&_svg]:overflow-visible">
            <button aria-label="Table" class="col-span-2 row-span-2"><svg viewBox="24 576 264 264" class="size-[88px]"><path d="M66 630h180v156H66zM66 678h180M66 714h180M66 750h180M126 678v108M186 678v108"/><use href="#badge" x="228" y="576" width="60" height="60"/></svg></button>
            <button aria-label="Table style" class="col-span-2 row-span-2"><svg viewBox="288 576 264 264" class="size-[88px]"><path d="M489 706v-91H327v156h90M327 663h162M327 699h162M327 735h120M381 663v108M435 663v80M489 752v21"/><use href="#brush" x="408" y="713" width="110" height="92"/><use href="#badge" x="492" y="576" width="60" height="60"/></svg></button>
            <button aria-label="Data link"><svg viewBox="552 576 132 132" class="size-11"><path d="M600 606h34l32 32v40h-96v-24h30z" fill="#d9d9d9" stroke="none"/><path d="M638 606l28 28h-28z" fill="#fff" stroke="none"/><path d="M590 626h40v34h-40zM590 643h40M610 626v34" stroke="#888" stroke-width="4"/><path d="M612 642h54v48h-54z" fill="#fff" stroke="#3c4352" stroke-width="3"/><path d="M612 642h54v12h-54z" fill="#999" stroke="none"/><path d="M624 665h6m8 0h16M624 677h6m8 0h16" stroke="#555" stroke-width="4"/><path d="M573 604q0-8 9-8t9 8v10q0 8-9 8t-9 8v8q0 8 9 8t9-8v-8q0-8-9-8t-9-8z" stroke="#e8a878"/></svg></button>
            <button aria-label="Download link"><svg viewBox="684 576 132 132" class="size-11"><path d="M732 600h34l32 32v24h-30v16h-66v-24h30z" fill="#d9d9d9" stroke="none"/><path d="M770 600l28 30h-28z" fill="#fff" stroke="none"/><path d="M726 618h40v36h-40zM726 636h40M746 618v36" stroke="#888" stroke-width="4"/><path d="M773 636h15v24h12l-20 30-20-30h13z" fill="#83c0fb" stroke="#3c4352" stroke-width="2"/><path d="M705 604q0-8 9-8t9 8v10q0 8-9 8t-9 8v8q0 8 9 8t9-8v-8q0-8-9-8t-9-8z" stroke="#e8a878"/></svg></button>
            <button aria-label="Field" class="col-start-5"><svg viewBox="552 708 132 132" class="size-11"><path d="M570 726h54v54h-54z" fill="#fff" stroke="none"/><path d="M582 741h6m6 0h18M582 753h6m6 0h18M582 765h6m6 0h18" stroke="#3d8de0" stroke-width="4"/><path d="M628 768h38v24h-72v-6h34z" fill="#9bcbfb" stroke="none"/><path d="M594 798h72v24h-72z" fill="#d9d9d9" stroke="none"/><text x="645" y="761" text-anchor="middle" font-size="46" font-weight="700" fill="#83c0fb" stroke="none">A</text></svg></button>
            <button aria-label="Update link"><svg viewBox="684 708 132 132" class="size-11"><path d="M732 752h20q20 34 46 20v50h-96v-42h30z" fill="#d9d9d9" stroke="none"/><path d="M722 770h56v32h-56zM722 786h56M741 770v32M760 770v32" stroke="#888" stroke-width="4"/><path d="M705 736q0-8 9-8t9 8v10q0 8-9 8t-9 8v8q0 8 9 8t9-8v-8q0-8-9-8t-9-8z" stroke="#e8a878"/><use href="#sync" x="749" y="724" width="50" height="46"/></svg></button>
          </div>
        </section>

        <section class="h-[134px]">
          <h2 class="flex h-[42px] items-center pt-[3px] font-['Liberation_Sans',sans-serif] text-[20px] text-[#f2f2f2]"><svg viewBox="0 0 17 9" class="mr-[9px] h-[9px] w-[17px]"><path d="M0 0h17L8.500 9z" fill="#f2f2f2" stroke="none"/></svg>Parametric<button aria-label="Parametric settings" class="ml-auto mr-[3px]"><svg viewBox="0 0 54 54" class="size-[18px]"><use href="#gear"/></svg></button></h2>
          <div class="grid grid-cols-8 [&_svg]:block">
            <button aria-label="Geometric constraint" class="col-span-2 row-span-2"><svg viewBox="24 1008 264 264" class="size-[88px]"><path d="M69 1044v168" stroke="#d5727a"/><path d="M60 1218h18v18H60z" fill="#d5727a" stroke="none"/><path d="M84 1227h168"/><use href="#tri" x="258" y="1242" width="24" height="24"/></svg></button>
            <button aria-label="Auto constrain"><svg viewBox="288 1008 132 132" class="size-11"><path d="M348 1026h36v30h-36z" fill="#9bcbfb" stroke="none"/><path d="M306 1068h36v30h-36z" fill="#d9d9d9" stroke="none"/><path d="M345 1026v72" stroke="#d5727a"/><path d="M386 1076l-30 24h18l-6 20 34-26h-18l8-18z" fill="#f8d68c" stroke="none"/></svg></button>
            <button aria-label="Show constraint"><svg viewBox="420 1008 132 132" class="size-11"><path d="M455 1029h-14v78h14M504 1029h15v36" stroke="#fff"/><path d="M457 1059l32 30" stroke="#d5727a"/><path d="M470 1060l6 10 26-26"/><use href="#bulbY" x="498" y="1071" width="36" height="52"/></svg></button>
            <button aria-label="Dimensional constraint" class="col-span-2 row-span-2"><svg viewBox="552 1008 264 264" class="size-[88px]"><path d="M591 1044v192M777 1044v192M612 1083h144"/><path d="M594 1083l24-14v28zM774 1083l-24-14v28z" fill="#d9d9d9" stroke="none"/><path d="M663 1166v-22a21 21 0 0 1 42 0v22" stroke="#f8d68c" stroke-width="11"/><path d="M645 1164h78v60h-78z" fill="#f8d68c" stroke="none"/><path d="M684 1182v24" stroke="#3c4352" stroke-width="6"/><use href="#tri" x="786" y="1242" width="24" height="24"/></svg></button>
            <button aria-label="Convert constraint"><svg viewBox="816 1008 132 132" class="size-11"><path d="M837 1026v96M927 1026v96M852 1047h60"/><path d="M840 1047l16-9v18zM924 1047l-16-9v18z" fill="#d9d9d9" stroke="none"/><path d="M878 1110c-16-6-16-30-4-38" stroke="#83c0fb"/><path d="M866 1070l16-2v14z" fill="#83c0fb" stroke="none"/><path d="M886 1074c16 4 18 30 4 36" stroke="#ec6f68"/><path d="M898 1114l-16 2v-16z" fill="#ec6f68" stroke="none"/></svg></button>
            <button aria-label="Show dimension"><svg viewBox="948 1008 132 132" class="size-11"><path d="M969 1026v96M1047 1026v38M984 1047h48"/><path d="M972 1047l16-9v18zM1044 1047l-16-9v18z" fill="#d9d9d9" stroke="none"/><use href="#bulbY" x="1026" y="1071" width="36" height="52"/></svg></button>
            <button aria-label="Toggle all constraints"><svg viewBox="288 1140 132 132" class="size-11"><path d="M323 1161h-14v78h14M372 1161h15v36" stroke="#fff"/><path d="M325 1191l32 30" stroke="#d5727a"/><path d="M338 1192l6 10 26-26"/><use href="#bulbH" x="364" y="1203" width="38" height="52"/></svg></button>
            <button aria-label="Hide constraints"><svg viewBox="420 1140 132 132" class="size-11"><path d="M455 1161h-14v78h14M504 1161h15v36" stroke="#fff"/><path d="M457 1191l32 30" stroke="#d5727a"/><path d="M470 1192l6 10 26-26"/><use href="#bulbC" x="498" y="1203" width="36" height="52"/></svg></button>
            <button aria-label="Toggle dimensions"><svg viewBox="816 1140 132 132" class="size-11"><path d="M837 1158v96M915 1158v38M852 1179h48"/><path d="M840 1179l16-9v18zM912 1179l-16-9v18z" fill="#d9d9d9" stroke="none"/><use href="#bulbH" x="891" y="1203" width="38" height="52"/></svg></button>
            <button aria-label="Hide dimensions"><svg viewBox="948 1140 132 132" class="size-11"><path d="M969 1158v96M1047 1158v38M984 1179h48"/><path d="M972 1179l16-9v18zM1044 1179l-16-9v18z" fill="#d9d9d9" stroke="none"/><use href="#bulbC" x="1026" y="1203" width="36" height="52"/></svg></button>
          </div>
        </section>
      </div>
      <div class="flex h-11 shrink-0 items-center gap-8 pl-[30px] fill-none stroke-[#d9d9d9] stroke-2">
        <button aria-label="Add tool set"><svg viewBox="0 0 24 24" class="size-6"><path d="M12 1v22M1 12h22"/></svg></button>
        <button aria-label="Manage tool sets"><svg viewBox="0 0 28 24" class="h-6 w-7"><path d="M6 3h21M6 9h21M6 21h21"/><path d="M1 15h18" stroke-width="4"/><path d="M20 17l3-4 3 4z" fill="#d9d9d9" stroke="none"/></svg></button>
      </div>
    </aside>

    <!-- Drawing area -->
    <div class="flex min-h-0 min-w-0 flex-col bg-[#222830]">
      <div role="tablist" class="flex h-[44px] shrink-0 bg-[#3c4454] font-['Noto_Sans',sans-serif] text-[22px] text-[#a9acb1]">
        <button aria-label="Start" class="grid w-12 place-items-center border-r-2 border-[#262c36]"><svg viewBox="0 0 28 28" class="size-7"><path d="M0 1h13v13H0z" fill="#83c0fb"/><path d="M15 3h12v11H15zM1 16h12v12H1zM15 16h12v12H15z" fill="#d9d9d9"/></svg></button>
        <button aria-label="New drawing" class="grid w-[46px] place-items-center border-r-2 border-[#262c36]"><svg viewBox="0 0 24 24" class="size-6"><path d="M12 1v22M1 12h22" stroke="#d9d9d9" stroke-width="2"/></svg></button>
        <button role="tab" class="w-[258px] border-r-2 border-[#262c36] pb-1.5 pl-[7px] text-left">rd_2</button>
        <button role="tab" aria-selected="true" class="w-[258px] border-r-2 border-[#262c36] bg-[#4d586c] pb-1 pl-[6px] text-left text-[21px] font-bold text-white">solidos*</button>
        <button role="tab" class="w-[258px] border-r-2 border-[#262c36] pb-1.5 pl-[7px] text-left">figuras_geo.bak</button>
      </div>

      <div class="relative min-h-0 flex-1">
        <svg viewBox="369 208 1837 1424" class="absolute inset-0 size-full" aria-label="Octahedron">
          <path d="M1344 489L1091 840 1532 854z" fill="#818181"/>
          <path d="M1091 840L994 971 1157 975z" fill="#7d7d7d"/>
          <path d="M1091 840L1532 854 1600 991 1157 975z" fill="#959595"/>
          <path d="M1344 489L1697 861 1532 854z" fill="#565656"/>
          <path d="M1532 854L1697 861 1600 991z" fill="#696969"/>
          <path d="M1157 975L1600 991 1344 1341z" fill="#6c6c6c"/>
          <path d="M994 971L1157 975 1344 1341z" fill="#575757"/>
          <path d="M1091 840L1697 861M1091 840L1344 1341M1091 840L1344 489" fill="none" stroke="#b4b4b4" stroke-width="1.500"/>
          <path d="M994 971L1344 489 1697 861 1344 1341zM994 971L1600 991 1344 489M1600 991L1344 1341" fill="none" stroke="#f2f2f2" stroke-width="1.500"/>
          <path d="M986 847h20l-20 20h20" fill="none" stroke="#2f4a94" stroke-width="2"/>
          <path d="M1000 920l7 8m9-7l-16 18" stroke="#1f6a2a" stroke-width="2"/>
          <path d="M996 966l8-14" stroke="#1e6428" stroke-width="12" stroke-linecap="round"/>
          <path d="M990 874v96" stroke="#3f66b8" stroke-width="11"/><path d="M988 876v92" stroke="#7ea0e4" stroke-width="3"/>
          <path d="M994 970l94 3" stroke="#9c3f3f" stroke-width="9"/><path d="M996 968l90 3" stroke="#d98a8a" stroke-width="3"/>
          <path d="M1080 945l22 20M1102 945l-22 20" stroke="#d04040" stroke-width="2"/>
          <path d="M2033 1222v98M2033 1332v45" stroke="#59689a" stroke-width="2"/>
          <path d="M1982 1326h45M2039 1326h101" stroke="#b0524f" stroke-width="2"/>
          <path d="M2038 1321l11-17" stroke="#4f8055" stroke-width="2"/>
          <rect x="2027" y="1320" width="12" height="12" fill="none" stroke="#e8e8e8" stroke-width="2"/>
        </svg>

        <div class="absolute left-[30px] top-[11px] flex items-center font-['Noto_Sans',sans-serif] text-[24px] leading-[30px] text-[#a5a5a3]">
          <button class="w-[38px] pr-[22px] text-[22px]" aria-label="Viewport controls">+</button>
          <button class="border-l-2 border-[#a5a5a3] pl-[11px]">Custom View</button>
          <button class="ml-4 border-l-2 border-[#a5a5a3] pl-[11px]">X-Ray</button>
        </div>

        <div class="absolute -right-[3px] top-[82px] w-[330px]">
          <svg viewBox="0 0 990 730" class="block w-full" aria-label="View cube">
            <path fill-rule="evenodd" d="M97 432a403 116 0 1 0 806 0a403 116 0 1 0-806 0zM196 424a302 87 0 1 0 604 0a302 87 0 1 0-604 0z" fill="#4a4e54"/>
            <path d="M322 122L384 82 656 88 630 130z" fill="#b9babc" stroke="#666" stroke-width="2"/>
            <path d="M630 130L656 88 653 352 627 433z" fill="#8c8d90" stroke="#555" stroke-width="2"/>
            <path d="M322 122L630 130 627 433 325 418z" fill="url(#cubeF)"/>
            <path d="M377 180l193 6-3 188-187-8z" fill="#8e939c"/>
            <g font-family="Roboto, sans-serif" font-weight="700"><text x="477" y="303" text-anchor="middle" font-size="67" fill="#4c5157">FRONT</text>
            <text x="500" y="116" text-anchor="middle" font-size="30" fill="#555a60">TOP</text></g>
            <g font-family="Inter, sans-serif" font-weight="600" fill="#b9babb"><text x="160" y="412" text-anchor="middle" font-size="64">W</text><text x="865" y="448" text-anchor="middle" font-size="64">E</text><text x="426" y="560" text-anchor="middle" font-size="72">S</text></g>
            <path d="M633 236v60M638 240l8 30M647 210v54" stroke="#5a5e63" stroke-width="4"/>
          </svg>
        </div>
        <button class="absolute right-[111px] top-[342px] flex h-6 w-[100px] items-center justify-between rounded-lg bg-[#6b7378] pl-2 pr-[9px] font-['Liberation_Sans',sans-serif] text-[22px] leading-6 text-[#20262e]">WCS<svg viewBox="0 0 20 12" class="h-3 w-5"><path d="M2 1h16l-8 9z" fill="#8fb0ac" stroke="#20262e" stroke-width="1.500"/></svg></button>

        <!-- Command line -->
        <div class="absolute bottom-0 left-1/2 w-[1000px] -translate-x-1/2 font-['Noto_Sans',sans-serif]">
          <div class="ml-20 flex h-[108px] justify-between bg-[#3c4454] pl-[10px] pr-[11px] text-[20px] leading-[30px] text-[#b9bcc1]">
            <p class="whitespace-pre pt-[18px]">Command: UCS
Current ucs name:  *NO NAME*
Specify origin of UCS or [Face/NAmed/OBject/Previous/View/World/X/Y/Z/ZAxis] &lt;World&gt;:</p>
            <span class="mt-16 h-10 w-2 rounded bg-[#8f9298]"></span>
          </div>
          <div class="flex h-[50px] items-center bg-[#3c4454]">
            <button aria-label="Command options" class="w-[90px] pl-[17px]"><svg viewBox="0 0 44 24" class="h-6 w-11"><path d="M1 4l9 5-9 5M14 19h13" fill="none" stroke="#b9bcc1" stroke-width="2.500"/><path d="M31 8h12l-6 8z" fill="#a5a8ad"/></svg></button>
            <input aria-label="Command" placeholder="Type a command" class="min-w-0 flex-1 bg-transparent text-[22px] italic outline-none placeholder:text-[#9b9fa6]">
            <button aria-label="Recent commands" class="mr-6"><svg viewBox="0 0 12 9" class="h-[9px] w-3"><path d="M0 0h12L6 9z" fill="#a0a3a8"/></svg></button>
            <button aria-label="Expand command history" class="mr-5"><svg viewBox="0 0 28 28" class="size-7"><path d="M10 9H2v17h24V9h-7M9 9v17" fill="none" stroke="#d9d9d9" stroke-width="2.500"/><path d="M14 17V5" stroke="#83c0fb" stroke-width="2.500"/><path d="M9 7h10l-5-7z" fill="#83c0fb"/></svg></button>
          </div>
        </div>
      </div>
    </div>

    <!-- Layers palette -->
    <aside class="flex min-h-0 flex-col border-l-2 border-[#232932] bg-[#3c4454]">
      <div class="flex h-[44px] shrink-0">
        <button role="tab" aria-label="Layers" class="grid w-[104px] place-items-center"><svg viewBox="0 0 34 32" class="h-8 w-[34px]"><use href="#sheets" width="30" height="30"/><circle cx="26" cy="23" r="8" fill="#d9d9d9" stroke="#3c4454"/><path d="M26 18v2m0 2v6" stroke="#333" stroke-width="2.500"/></svg></button>
        <div class="flex-1 border-b-2 border-l-2 border-[#232932] bg-[#2f333f]"></div>
        <button aria-label="Expand" class="w-[49px] border-b-2 border-l-2 border-[#232932] pb-1 text-[22px] text-[#a4a6ab]">»</button>
      </div>
      <div class="flex h-[66px] shrink-0 items-start pl-5 pr-5">
        <h2 class="w-[100px] pt-[1px] text-[23px] leading-8 text-[#eee]">Layers</h2>
        <div role="toolbar" aria-label="Layer tools" class="flex fill-none pt-3 [&>button]:grid [&>button]:h-8 [&>button]:w-12 [&>button]:place-items-center [&_svg]:size-8">
          <button aria-label="Isolate"><svg viewBox="0 0 32 32"><path d="M8 9h23l-7 9H1z" fill="#83c0fb"/><circle cx="16" cy="6" r="6" fill="#d9d9d9"/><path d="M27 17h4l-6 7H1l2-3h20zM27 24h4l-6 7H1l2-3h20z" fill="#d9d9d9"/></svg></button>
          <button aria-label="Match"><svg viewBox="0 0 32 32"><use href="#sheets" width="28" height="28"/><path d="M15 22l5-5 10 12-4 3z" fill="#f8d68c" stroke="#3c4454"/><path d="M22 22l8-4" stroke="#fff" stroke-width="4"/></svg></button>
          <button aria-label="Previous"><svg viewBox="0 0 32 32"><use href="#sheets" x="4" y="6" width="27" height="27"/><path d="M0 6L9-1v4c8 0 12 3 12 8-3-2-6-3-12-3v5z" fill="#83c0fb" stroke="#3c4454"/></svg></button>
          <button aria-label="Make current"><svg viewBox="0 0 32 32"><use href="#sheets" width="29" height="29"/><path d="M25 18h4l-7 8H2l2-4h17z" fill="#83c0fb"/><path d="M27 20l-9 9" stroke="#fff" stroke-width="2.500"/><path d="M15 24v8h8z" fill="#fff"/></svg></button>
          <button aria-label="Change to current"><svg viewBox="0 0 32 32"><use href="#sheets" width="29" height="29"/><path d="M25 18h4l-7 8H2l2-4h17z" fill="#83c0fb"/><path d="M18 31l10-11" stroke="#fff" stroke-width="2.500"/><path d="M31 25v-8h-8z" fill="#fff"/></svg></button>
          <button aria-label="Freeze" class="text-[#83d9e2]"><svg viewBox="0 0 32 32"><path d="M9 2h19L17 15H0z" fill="#d9d9d9"/><use href="#snow" x="13" y="12" width="19" height="19"/></svg></button>
          <button aria-label="Off"><svg viewBox="0 0 32 32"><path d="M9 2h19L17 15H0z" fill="#d9d9d9"/><use href="#bulbC" x="17" y="12" width="14" height="19"/></svg></button>
          <button aria-label="Lock" class="text-[#83d9e2]"><svg viewBox="0 0 32 32"><path d="M9 2h19L17 15H0z" fill="#d9d9d9"/><use href="#lock" x="16" y="10" width="16" height="21"/></svg></button>
          <button aria-label="Unlock"><svg viewBox="0 0 32 32"><path d="M9 2h19L17 15H0z" fill="#d9d9d9"/><path d="M23 19v-4a3.500 3.500 0 0 1 7 0v4" stroke="#f8d68c" stroke-width="2.500"/><path fill-rule="evenodd" d="M13 18h13v12H13zM19 21v6h1v-6z" fill="#f8d68c"/></svg></button>
        </div>
        <button aria-label="Undock palette" class="ml-auto"><svg viewBox="0 0 24 30" class="mt-[2px] h-[30px] w-6"><path d="M8 8V2h13v26H8v-6M2 15h10" fill="none" stroke="#e8e8e8" stroke-width="2.500"/><path d="M8 1h13v4H8zM0 15l6-5v10z" fill="#e8e8e8"/></svg></button>
      </div>
      <div class="flex shrink-0 flex-col gap-[3px] pl-[19px] pr-[15px] text-[22px]">
        <label class="relative flex">
          <select aria-label="Current layer" class="h-[54px] w-full appearance-none rounded border-2 border-[#2c3a3b] bg-[#4f596c] pb-0.5 pl-[161px] outline-none"><option>octaedro</option></select>
          <span class="pointer-events-none absolute inset-y-0 left-5 flex items-center text-[#737a87]">
            <span class="size-4 rounded-full bg-[#d9d9d9]"></span>
            <svg viewBox="0 0 20 28" class="ml-[17px] h-5 w-[18px]"><use href="#lock"/></svg>
            <svg viewBox="0 0 24 24" class="ml-4 size-[18px]"><use href="#snow"/></svg>
            <span class="ml-4 size-[18px] border-2 border-black bg-white"></span>
          </span>
          <svg viewBox="0 0 12 9" class="pointer-events-none absolute right-[10px] top-[22px] h-[9px] w-3"><path d="M0 0h12L6 9z" fill="#d9d9d9"/></svg>
        </label>
        <label class="relative mx-0.5 flex">
          <select aria-label="Layer state" class="h-[53px] w-full appearance-none rounded border-2 border-[#2c3a3b] bg-[#4f596c] pb-0.5 pl-[11px] outline-none"><option>Unsaved Layer State</option></select>
          <svg viewBox="0 0 12 9" class="pointer-events-none absolute right-[10px] top-[22px] h-[9px] w-3"><path d="M0 0h12L6 9z" fill="#d9d9d9"/></svg>
        </label>
      </div>
      <button class="flex h-[49px] shrink-0 items-center gap-6 pl-7 text-[22px] text-[#c4c7cc]"><svg viewBox="0 0 17 10" class="h-2.5 w-[17px]"><path d="M1 1l7.500 8L16 1" fill="none" stroke="#c4c7cc" stroke-width="2.500"/></svg>Hide Layer List</button>
      <div class="ml-[22px] mr-[23px] mt-[7px] min-h-0 flex-1 border-2 border-[#2c323e] bg-[#4e586b]">
        <table class="w-full table-fixed border-collapse text-left text-[22px]">
          <colgroup><col class="w-[62px]"><col class="w-[230px]"><col class="w-11"><col class="w-11"><col class="w-[94px]"><col class="w-[94px]"><col></colgroup>
          <thead>
            <tr class="h-[45px] bg-[#2e323e] text-[#d9d9d9] [&_svg]:mx-auto [&>th]:border-r-2 [&>th]:border-b-2 [&>th]:border-[#2a2e39] [&>th]:p-0 [&>th]:font-normal">
              <th aria-label="Visible"><svg viewBox="0 0 26 18" class="h-[18px] w-[26px]"><path d="M1 9q12-16 24 0-12 16-24 0z" fill="#d9d9d9"/><circle cx="13" cy="9" r="6" fill="#2e323e"/><circle cx="13" cy="9" r="3.500" fill="#d9d9d9"/><circle cx="13" cy="9" r="1.500" fill="#2e323e"/></svg></th>
              <th class="relative bg-[#4d576b]"><div class="flex items-center pl-[9px] pr-3"><svg viewBox="0 0 16 16" class="mx-0! size-4"><path d="M1 1h14v14H1z" fill="none" stroke="#e8e8e8" stroke-width="2"/><path d="M15 1v14H1z" fill="#e8e8e8" transform="rotate(180 8 8)"/></svg><span class="ml-[15px] font-bold">Name</span><svg viewBox="0 0 12 18" class="mx-0! ml-auto! h-[18px] w-3"><path d="M0 7h12L6 0zM0 11h12l-6 7z" fill="#d9d9d9"/></svg></div><svg viewBox="0 0 14 10" class="absolute bottom-0 left-[106px] h-2.5 w-3.5"><path d="M0 10L7 0l7 10z" fill="#4a90e8"/></svg></th>
              <th aria-label="Freeze"><svg viewBox="0 0 24 24" class="size-5"><use href="#snow"/></svg></th>
              <th aria-label="Lock"><svg viewBox="0 0 20 28" class="h-[22px] w-4"><use href="#lock"/></svg></th>
              <th aria-label="Lineweight"><svg viewBox="0 0 20 16" class="h-4 w-5"><path d="M0 1h20M0 7h20" stroke="#d9d9d9" stroke-width="2"/><path d="M0 14h20" stroke="#d9d9d9" stroke-width="4"/></svg></th>
              <th aria-label="Linetype"><svg viewBox="0 0 20 16" class="h-4 w-5"><path d="M0 15h20" stroke="#d9d9d9" stroke-width="2"/><path d="M0 8h20" stroke="#d9d9d9" stroke-width="2" stroke-dasharray="5 2"/><path d="M0 2h20" stroke="#d9d9d9" stroke-width="2" stroke-dasharray="2 1"/></svg></th>
              <th aria-label="Viewport"><svg viewBox="0 0 20 16" class="h-4 w-5"><path d="M16 12H1V1h15v2M5 4h14v11H5zM8 7h8v4H8z" fill="none" stroke="#d9d9d9" stroke-width="2"/></svg></th>
            </tr>
          </thead>
          <tbody class="[&>tr]:h-[38px] [&_td]:p-0">
            <tr><td><span class="ml-[28px] block size-4 rounded-full bg-[#d9d9d9]"></span></td><td><span class="flex items-center gap-[18px]"><span class="size-[18px] border-2 border-black bg-white"></span>0</span></td><td></td><td></td><td><span class="pl-3">De...</span></td><td><span class="ml-4 block h-0.5 w-16 bg-white"></span></td><td></td></tr>
            <tr><td><span class="ml-[28px] block size-4 rounded-full bg-[#d9d9d9]"></span></td><td><span class="flex items-center gap-[18px]"><span class="size-[18px] border-2 border-black bg-white"></span>cubo</span></td><td><svg viewBox="0 0 24 24" class="mx-auto size-5 text-[#d9d9d9]"><use href="#snow"/></svg></td><td></td><td><span class="pl-3">De...</span></td><td><span class="ml-4 block h-0.5 w-16 bg-white"></span></td><td></td></tr>
            <tr><td><span class="ml-[28px] block size-4 rounded-full bg-[#d9d9d9]"></span></td><td><span class="flex items-center gap-[18px]"><span class="size-[18px] border-2 border-black bg-white"></span>Defpoints</span></td><td></td><td></td><td><span class="pl-3">De...</span></td><td><span class="ml-4 block h-0.5 w-16 bg-white"></span></td><td></td></tr>
            <tr><td><span class="ml-[28px] block size-4 rounded-full bg-[#d9d9d9]"></span></td><td><span class="flex items-center gap-[18px]"><span class="size-[18px] border-2 border-black bg-white"></span>dodecaedro</span></td><td></td><td></td><td><span class="pl-3">De...</span></td><td><span class="ml-4 block h-0.5 w-16 bg-white"></span></td><td></td></tr>
            <tr><td><span class="ml-[28px] block size-4 rounded-full bg-[#d9d9d9]"></span></td><td><span class="flex items-center gap-[18px]"><span class="size-[18px] border-2 border-black bg-white"></span>icosaedro</span></td><td></td><td></td><td><span class="pl-3">De...</span></td><td><span class="ml-4 block h-0.5 w-16 bg-white"></span></td><td></td></tr>
            <tr class="bg-[#909cae]"><td><span class="ml-[28px] block size-4 rounded-full bg-[#d9d9d9]"></span></td><td><span class="flex items-center gap-[18px]"><span class="size-[18px] border-2 border-black bg-white"></span>octaedro</span></td><td></td><td></td><td><span class="pl-3">De...</span></td><td><span class="ml-4 block h-0.5 w-16 bg-white"></span></td><td></td></tr>
            <tr><td><span class="ml-[28px] block size-4 rounded-full bg-[#d9d9d9]"></span></td><td><span class="flex items-center gap-[18px]"><span class="size-[18px] border-2 border-black bg-white"></span>tetraedro</span></td><td><svg viewBox="0 0 24 24" class="mx-auto size-5 text-[#d9d9d9]"><use href="#snow"/></svg></td><td></td><td><span class="pl-3">De...</span></td><td><span class="ml-4 block h-0.5 w-16 bg-white"></span></td><td></td></tr>
          </tbody>
        </table>
      </div>
      <div class="flex h-[52px] shrink-0 items-center gap-8 pl-[36px] pr-[31px] fill-none stroke-[#d9d9d9] stroke-2 [&_svg]:h-7">
        <button aria-label="New layer"><svg viewBox="0 0 28 28"><path d="M9 2h16l-7 9H2zM24 9h2l-7 9H2M24 16h2l-7 9H2"/></svg></button>
        <button aria-label="Layer states"><svg viewBox="0 0 32 32"><path d="M9 1h16l-7 9H2zM24 8l-4 6M2 15h9M2 22h9"/><rect x="13" y="15" width="17" height="15" fill="#4a4f5a"/><path d="M16 20h3m2 0h6M16 25h3m2 0h6"/></svg></button>
        <button aria-label="New group"><svg viewBox="0 0 28 28"><path d="M1 4h9l3 4h8v3H9L1 24z" fill="#d9d9d9" stroke="none"/><path d="M9 12h18l-5 14H3z" fill="#d9d9d9" stroke="none"/></svg></button>
        <button aria-label="New dynamic group"><svg viewBox="0 0 28 28"><path d="M1 4h9l3 4h8v3H9L1 24z" fill="#d9d9d9" stroke="none"/><path d="M9 12h18l-5 14H3z" fill="#d9d9d9" stroke="none"/><path d="M17 13l-7 7h5l-3 5 8-7h-5z" fill="#3c4454" stroke="none"/></svg></button>
        <button aria-label="Delete layer" class="ml-auto h-1 w-4 bg-[#7e8490]"></button>
        <button aria-label="Columns"><svg viewBox="0 0 38 28"><path d="M2 6h17v16H2zM8 6v16M13 6v16"/><path d="M27 12h10l-5 7z" fill="#d9d9d9" stroke="none"/></svg></button>
      </div>
      <label class="mb-[18px] ml-[22px] mr-[22px] flex h-10 shrink-0 items-center rounded-[10px] bg-white pl-[9px]">
        <svg viewBox="0 0 36 26" class="h-[26px] w-9 fill-none stroke-[#222] stroke-[2.5px]"><circle cx="10" cy="10" r="8"/><path d="M16 16l7 8M24 10l4 4 5-4"/></svg>
        <input aria-label="Search for layer" placeholder="Search for layer" class="ml-[9px] min-w-0 flex-1 bg-transparent text-[25px] text-[#222] outline-none placeholder:text-[#bcbcbc]">
      </label>
    </aside>

    <!-- Layout tabs and status bar -->
    <div class="col-span-2 flex items-stretch border-y-2 border-[#232932] bg-[#3a4252] text-[#b9bcc1]">
      <div role="tablist" class="flex font-['Noto_Sans',sans-serif] text-[22px]">
        <button role="tab" aria-selected="true" class="w-[118px] border-r-2 border-[#232932] bg-[#4b566a] pb-1 pr-2 text-[20px] font-bold text-white">Model</button>
        <button aria-label="New layout" class="grid w-12 place-items-center border-r-2 border-[#232932]"><svg viewBox="0 0 24 24" class="size-6"><path d="M12 1v22M1 12h22" stroke="#d9d9d9" stroke-width="2"/></svg></button>
        <button role="tab" class="w-[118px] border-r-2 border-[#232932] pb-1 pr-2 text-[#9b9fa6]">a3rd</button>
      </div>
      <output class="ml-auto flex items-center whitespace-pre border-l-2 border-[#232932] pl-2 font-['Noto_Sans',sans-serif] text-[24px]">2.102,  -2.398 , 0.000</output>
      <div role="toolbar" aria-label="Drafting settings" class="flex items-center pl-[6px] pr-2 fill-none stroke-[#d9d9d9] stroke-2 [&>button]:grid [&>button]:h-10 [&>button]:place-items-center [&_svg]:size-8">
        <button aria-label="Grid" class="w-11"><svg viewBox="0 0 32 32"><path d="M8 1v30M16 1v30M24 1v30M1 8h30M1 16h30M1 24h30"/></svg></button>
        <button aria-label="Snap" class="w-11"><svg viewBox="0 0 32 32"><path d="M4 6h24M4 16h24M4 26h24" stroke-width="4" stroke-dasharray="4 6"/></svg></button>
        <button aria-label="Ortho" class="w-11"><svg viewBox="0 0 32 32"><path d="M1 1v29h31M1 20h10v10"/></svg></button>
        <button aria-label="Polar" class="w-11"><svg viewBox="0 0 32 32"><circle cx="14" cy="17" r="12"/><path d="M14 17h18M14 17L28 3"/></svg></button>
        <button aria-label="Dynamic input" class="w-11"><svg viewBox="0 0 32 32"><path d="M7 5v14M0 12h14"/><path d="M12 20h20v8H12z" fill="#d9d9d9" stroke="none"/></svg></button>
        <button aria-label="Lineweight" class="w-11"><svg viewBox="0 0 32 32"><path d="M0 4h32M0 14h32M0 23h32"/><path d="M0 6h16M0 16h16" stroke-width="3"/><path d="M0 27h16" stroke-width="7"/></svg></button>
        <button aria-label="Transparency" class="w-11"><svg viewBox="0 0 32 32"><rect x="2" y="2" width="27" height="27"/><rect x="5" y="5" width="21" height="21" fill="url(#chk)" stroke="none"/></svg></button>
        <button aria-label="Selection cycling" class="w-11"><svg viewBox="0 0 32 32"><path d="M7 2H2v26h5M18 2h5v14" stroke="#fff"/><path d="M9 6h7v7H9z" stroke="#76d28c" stroke-width="2.500"/><circle cx="12.500" cy="21" r="4" stroke="#76d28c" stroke-width="2.500"/><path d="M20 14l10 12h-5l3 6-3 1-3-6-3 2z" fill="#fff" stroke="none"/></svg></button>
        <button aria-label="Object snap tracking" class="w-11"><svg viewBox="0 0 32 32"><path d="M32 27H2L24 5"/><path d="M11 13h6v6h-6z" fill="#d9d9d9" stroke="none"/></svg></button>
        <button aria-label="Object snap" class="mx-0.5 w-10 bg-[#6386b6]"><svg viewBox="0 0 32 32" class="stroke-white"><path d="M12 5h18v26H3V13M1 1h8v8H1z"/></svg></button>
        <button aria-label="Annotation visibility" class="mx-0.5 w-10 bg-[#6386b6]"><svg viewBox="0 0 32 32"><path d="M15 0l5 16v6l9 10-12-4-2-3-2 3-12 4 9-10v-6z" fill="#fff" stroke="none"/><circle cx="26" cy="8" r="6" fill="#fff" stroke="none"/></svg></button>
        <button aria-label="Auto scale" class="w-11"><svg viewBox="0 0 32 32"><path d="M15 0l5 16v6l9 10-12-4-2-3-2 3-12 4 9-10v-6z" fill="#d9d9d9" stroke="none"/><path d="M28 0l-8 9h5l-3 7 10-9h-5z" fill="#f8d68c" stroke="none"/></svg></button>
        <button aria-label="Annotation scale icon" class="w-11"><svg viewBox="0 0 32 32"><path d="M16 0l5 16v6l9 10-12-4-2-3-2 3-12 4 9-10v-6z" fill="#d9d9d9" stroke="none"/></svg></button>
        <button aria-label="Annotation scale" class="flex! w-[57px] items-center gap-2 font-['Noto_Sans',sans-serif] text-[22px]">1:1<svg viewBox="0 0 11 9" class="h-[9px]! w-[11px]! "><path d="M0 0h11l-5.500 9z" fill="#d9d9d9" stroke="none"/></svg></button>
        <button aria-label="Isolate objects" class="w-11"><svg viewBox="0 0 32 32"><rect x="1" y="1" width="12" height="12"/><circle cx="25" cy="13" r="6"/><path d="M13 19l7 12H6z"/></svg></button>
        <button aria-label="Workspace settings" class="w-11"><svg viewBox="0 0 54 54"><use href="#gear"/></svg></button>
      </div>
    </div>
  </div>
</main>

<!-- Dock -->
<footer class="mx-[70px] mb-2.5 mt-1 flex h-[106px] shrink-0 items-start rounded-[28px] border-2 border-[#86cdd2] bg-linear-to-r from-[#56bfc0] via-[#58bcc4] to-[#5a9fb0] pl-[3px] pr-1.5 pt-[14px] [&>button]:relative [&>button]:flex [&>button]:flex-1 [&>button]:justify-center [&_svg]:size-[68px] [&_svg]:overflow-visible">
  <button aria-label="Finder"><svg viewBox="0 0 68 68"><rect width="68" height="68" rx="15" fill="#e3e7ee"/><path d="M38 0H15A15 15 0 0 0 0 15v38a15 15 0 0 0 15 15h26q-2-10-2-22H30Q31 18 38 0z" fill="url(#dFind)"/><path d="M18 20v6M50 20v6" stroke="#16202c" stroke-width="3" stroke-linecap="round"/><path d="M14 46q20 17 40 0" fill="none" stroke="#16202c" stroke-width="3" stroke-linecap="round"/></svg><span class="absolute top-20 size-2 rounded-full bg-[#0a4d55]"></span></button>
  <button aria-label="Stickies"><svg viewBox="0 0 68 68"><rect y="6" width="68" height="62" rx="15" fill="#cfb75a"/><path d="M15 0h38a15 15 0 0 1 15 15v27Q60 58 40 61H15A15 15 0 0 1 0 46V15A15 15 0 0 1 15 0z" fill="url(#dStick)"/><path d="M13 24q3-16 5-12 1 6-1 12 4-8 8-8 3 4 6 4h26M11 33h46M11 45h25" fill="none" stroke="#d8c765" stroke-width="4"/></svg><span class="absolute top-20 size-2 rounded-full bg-[#0a4d55]"></span></button>
  <button aria-label="Launchpad"><svg viewBox="0 0 68 68"><rect width="68" height="68" rx="15" fill="#c5e3e6"/><rect x="11" y="11" width="13" height="13" rx="3" fill="#7be060"/><rect x="28" y="11" width="13" height="13" rx="3" fill="#f6bd3c"/><rect x="45" y="11" width="13" height="13" rx="3" fill="#ee8f35"/><rect x="11" y="28" width="13" height="13" rx="3" fill="#d5352c"/><rect x="28" y="28" width="13" height="13" rx="3" fill="#8d979c"/><rect x="45" y="28" width="13" height="13" rx="3" fill="#ee4d68"/><rect x="11" y="45" width="13" height="13" rx="3" fill="#9746cf"/><rect x="28" y="45" width="13" height="13" rx="3" fill="#3a8cf0"/><rect x="45" y="45" width="13" height="13" rx="3" fill="#62cba6"/></svg></button>
  <button aria-label="Messages"><svg viewBox="0 0 68 68"><rect width="68" height="68" rx="15" fill="url(#dGreen)"/><ellipse cx="34" cy="32" rx="25" ry="21" fill="#f2fbf1"/><path d="M22 48q0 6-5 9 9-1 13-7z" fill="#f2fbf1"/></svg><span class="absolute top-20 size-2 rounded-full bg-[#0a4d55]"></span></button>
  <button aria-label="Mail"><svg viewBox="0 0 68 68"><rect width="68" height="68" rx="15" fill="url(#dMail)"/><rect x="10" y="19" width="48" height="30" rx="4" fill="#f0f0f0"/><path d="M12 20l19 20q3 3 6 0l19-20M12 48l15-14M56 48L41 34" fill="none" stroke="#a2a6ab" stroke-width="1.500"/></svg><span class="absolute top-20 size-2 rounded-full bg-[#0a4d55]"></span></button>
  <button aria-label="Photos"><svg viewBox="0 0 68 68"><rect width="68" height="68" rx="15" fill="#fff"/><g fill-opacity=".85"><ellipse cx="34" cy="18" rx="9" ry="14" fill="#f29a37"/><ellipse cx="34" cy="18" rx="9" ry="14" fill="#d3d139" transform="rotate(45 34 34)"/><ellipse cx="34" cy="18" rx="9" ry="14" fill="#a3cf52" transform="rotate(90 34 34)"/><ellipse cx="34" cy="18" rx="9" ry="14" fill="#66b38c" transform="rotate(135 34 34)"/><ellipse cx="34" cy="18" rx="9" ry="14" fill="#6ca5e0" transform="rotate(180 34 34)"/><ellipse cx="34" cy="18" rx="9" ry="14" fill="#8474c4" transform="rotate(225 34 34)"/><ellipse cx="34" cy="18" rx="9" ry="14" fill="#bd6d9f" transform="rotate(270 34 34)"/><ellipse cx="34" cy="18" rx="9" ry="14" fill="#ea5845" transform="rotate(315 34 34)"/></g></svg><span class="absolute -top-2 left-14 grid size-8 place-items-center rounded-full bg-[#e5503f] text-[20px]">1</span></button>
  <button aria-label="FaceTime"><svg viewBox="0 0 68 68"><rect width="68" height="68" rx="15" fill="url(#dGreen)"/><rect x="9" y="19" width="34" height="30" rx="8" fill="#f2fbf1"/><path d="M46 31l12-9v25l-12-9z" fill="#dff2dd"/></svg><span class="absolute -top-2 left-14 grid size-8 place-items-center rounded-full bg-[#e5503f] text-[20px]">1</span></button>
  <button aria-label="Calendar"><svg viewBox="0 0 68 68"><rect width="68" height="68" rx="15" fill="#fafafa"/><path d="M0 21v-6A15 15 0 0 1 15 0h38a15 15 0 0 1 15 15v6z" fill="#e25b4f"/><text x="34" y="16" text-anchor="middle" font-size="14" font-weight="600" fill="#fff">OUT.</text><text x="34" y="57" text-anchor="middle" font-size="41" font-weight="300" fill="#222">9</text></svg></button>
  <button aria-label="Contacts"><svg viewBox="0 0 68 68"><path d="M64 10h6v12h-6z" fill="#b5b5b5"/><path d="M64 22h6v13h-6z" fill="#62a9e0"/><path d="M64 35h6v12h-6z" fill="#ee9a3c"/><path d="M64 47h6v11h-6z" fill="#6fcf62"/><rect width="68" height="68" rx="15" fill="url(#dBook)"/><g fill="none" stroke="#7c5a34" stroke-width="2"><circle cx="36" cy="34" r="21"/></g><circle cx="36" cy="29" r="8" fill="#7f5c36"/><path d="M21 48q15-16 30 0-15 14-30 0z" fill="#7f5c36"/></svg></button>
  <button aria-label="Reminders"><svg viewBox="0 0 68 68"><rect width="68" height="68" rx="15" fill="#fbfbfb"/><g stroke="#c4c4c4" stroke-width="1.500"><path d="M25 17h35M25 34h35M25 51h35"/></g><g stroke="#fff" stroke-width="1.500"><circle cx="13" cy="17" r="5" fill="#3a76ee"/><circle cx="13" cy="34" r="5" fill="#e04b3e"/><circle cx="13" cy="51" r="5" fill="#ea9a35"/></g></svg><span class="absolute -top-2 left-14 grid size-8 place-items-center rounded-full bg-[#e5503f] text-[20px]">1</span></button>
  <button aria-label="Notes"><svg viewBox="0 0 68 68"><rect width="68" height="68" rx="15" fill="#f1f0ec"/><path d="M0 17v-2A15 15 0 0 1 15 0h38a15 15 0 0 1 15 15v2z" fill="#f8ce45"/><path d="M0 18h68M0 34h68M0 51h68" stroke="#c9c7c0" stroke-width="1.500"/></svg><span class="absolute top-20 size-2 rounded-full bg-[#0a4d55]"></span></button>
  <button aria-label="Freeform"><svg viewBox="0 0 68 68"><rect width="68" height="68" rx="15" fill="#fff"/><circle cx="28" cy="40" r="19" fill="#ef6f58"/><path d="M12 28q6-8 18-8v14H12z" fill="#f2953f"/><rect x="23" y="9" width="37" height="36" rx="4" fill="#5cc3f2" fill-opacity=".9"/><path d="M13 43q8-28 14-16 1 18 2 14 8-22 12-12 0 14 3 11 6-12 9-7 4 3 8-2" fill="none" stroke="#1d3b63" stroke-width="3"/></svg></button>
  <button aria-label="Apple TV"><svg viewBox="0 0 68 68"><rect width="68" height="68" rx="15" fill="url(#dBlack)"/><use href="#apple" x="9" y="20" width="21" height="26"/><text x="44" y="45" text-anchor="middle" font-size="29" font-weight="500" fill="#fff">tv</text></svg><span class="absolute top-20 size-2 rounded-full bg-[#0a4d55]"></span></button>
  <button aria-label="Safari"><svg viewBox="0 0 68 68"><rect width="68" height="68" rx="15" fill="url(#dWhite)"/><circle cx="34" cy="34" r="29" fill="#3f86e6"/><circle cx="34" cy="34" r="25" fill="none" stroke="#cfe2fa" stroke-width="4" stroke-dasharray="1 3"/><path d="M54 16L39 39 30 30z" fill="#e0463d"/><path d="M14 52l16-22 9 9z" fill="#f0f0f0"/></svg></button>
  <button aria-label="App Store"><svg viewBox="0 0 68 68"><rect width="68" height="68" rx="15" fill="url(#dStore)"/><path d="M30 15l21 37M38 15L22 42M12 42h28M49 42h7M19 48l-2 4" stroke="#fff" stroke-width="5.500" stroke-linecap="round"/></svg></button>
  <button aria-label="Music"><svg viewBox="0 0 68 68"><rect width="68" height="68" rx="15" fill="url(#dMusic)"/><path d="M24 48V17l24-6v31M24 24l24-6" fill="none" stroke="#fff" stroke-width="5"/><ellipse cx="19" cy="50" rx="7" ry="6" fill="#fff"/><ellipse cx="43" cy="45" rx="7" ry="6" fill="#fff"/></svg><span class="absolute top-20 size-2 rounded-full bg-[#0a4d55]"></span></button>
  <button aria-label="Pages"><svg viewBox="0 0 68 68"><rect width="68" height="68" rx="15" fill="#fefdfb"/><path d="M34 14h32M34 22h32M2 30h64M2 38h64M2 46h64M2 54h64" stroke="#f3d9a8" stroke-width="1.500"/><path d="M16 10q-8 4-8 11a4 4 0 1 0 4-4q1-4 4-5zM26 10q-8 4-8 11a4 4 0 1 0 4-4q1-4 4-5z" fill="#eea33b"/><path d="M50 6l6 2-20 36-6-2z" fill="#f0a030"/><path d="M30 41l6 3-6 9-6 8 1-11z" fill="#3a3a3a"/></svg></button>
  <button aria-label="System Settings"><svg viewBox="0 0 68 68"><rect width="68" height="68" rx="15" fill="url(#dGray)"/><circle cx="34" cy="34" r="29" fill="#2e3032"/><circle cx="34" cy="34" r="26" fill="none" stroke="#8c8c8c" stroke-width="3" stroke-dasharray="2 1"/><circle cx="34" cy="34" r="19" fill="#55585a" stroke="#a8a8a8" stroke-width="4"/><circle cx="34" cy="34" r="6" fill="none" stroke="#a8a8a8" stroke-width="3"/><path d="M40 34h13M31 29l-7-12M31 39l-7 12" stroke="#a8a8a8" stroke-width="4"/></svg></button>
  <button aria-label="Spotify"><svg viewBox="0 0 68 68"><circle cx="34" cy="34" r="35" fill="#65d36e"/><path d="M12 23q24-6 46 6M14 36q20-5 38 5M16 47q16-4 32 4" fill="none" stroke="#111" stroke-width="6" stroke-linecap="round"/></svg><span class="absolute top-20 size-2 rounded-full bg-[#0a4d55]"></span></button>
  <button aria-label="Chrome"><svg viewBox="0 0 68 68"><rect width="68" height="68" rx="15" fill="#f9fbfb"/><use href="#chrome" x="4" y="4" width="60" height="60"/></svg><span class="absolute top-20 size-2 rounded-full bg-[#0a4d55]"></span></button>
  <button aria-label="WhatsApp"><svg viewBox="0 0 68 68"><rect width="68" height="68" rx="15" fill="url(#dGreen)"/><use href="#wa" width="68" height="68"/></svg><span class="absolute top-20 size-2 rounded-full bg-[#0a4d55]"></span></button>
  <span class="mx-[18px] h-[78px] w-0.5 bg-[#2f8f97]"></span>
  <button aria-label="AutoCAD"><svg viewBox="0 0 68 68"><rect width="68" height="68" rx="15" fill="#fff"/><path d="M8 10l8-3v42l-8-6z" fill="#e06a88"/><path d="M14 6h46v38H14z" fill="#d2304f"/><path d="M12 44h48v18H12z" fill="#7a1330"/><text x="36" y="36" text-anchor="middle" font-size="30" font-weight="700" fill="#fff">A</text><text x="37" y="58" text-anchor="middle" font-size="12" font-weight="700" fill="#fff">CAD</text></svg><span class="absolute top-20 size-2 rounded-full bg-[#0a4d55]"></span></button>
  <button aria-label="Sublime Text"><svg viewBox="0 0 68 68"><rect width="68" height="68" rx="15" fill="url(#dSubl)"/><use href="#subl" x="15" y="9" width="38" height="50"/></svg><span class="absolute top-20 size-2 rounded-full bg-[#0a4d55]"></span></button>
  <button aria-label="WhatsApp (inactive)"><svg viewBox="0 0 68 68"><rect width="68" height="68" rx="15" fill="#b5b7b8"/><use href="#wa" width="68" height="68"/></svg><span class="absolute top-20 size-2 rounded-full bg-[#0a4d55]"></span></button>
  <button aria-label="OpenVPN"><svg viewBox="0 0 68 68"><circle cx="34" cy="34" r="37" fill="#fbfbfb"/><path d="M24 54A22 22 0 1 1 44 54" fill="none" stroke="#ea9449" stroke-width="11"/><circle cx="34" cy="33" r="8" fill="#1d2f5a"/><path d="M31 36h6l3 22H28z" fill="#1d2f5a"/></svg><span class="absolute top-20 size-2 rounded-full bg-[#0a4d55]"></span></button>
  <button aria-label="QGIS"><svg viewBox="0 0 68 68"><use href="#qgis" x="-6" y="-5" width="80" height="80"/></svg><span class="absolute top-20 size-2 rounded-full bg-[#0a4d55]"></span></button>
  <span class="mx-[18px] h-[78px] w-0.5 bg-[#2f8f97]"></span>
  <button aria-label="QGIS window"><svg viewBox="0 0 68 68"><path d="M-5 6h78v56H-5z" fill="#f6f7f8"/><path d="M-5 6h78v6H-5z" fill="#cfd4d8"/><path d="M-2 16h10v42H-2z" fill="#dde3e6"/><path d="M12 26l22 1 2 16-24 2z" fill="#4e8a4a"/><path d="M14 36l9 6h-9z" fill="#e07a3a"/><path d="M42 20h26M42 26h20M42 32h26M42 38h14" stroke="#b8bec4" stroke-width="1.500"/><use href="#qgis" x="44" y="44" width="30" height="30"/></svg></button>
  <button aria-label="Sublime Text window"><svg viewBox="0 0 68 68"><path d="M-5 4h78v60H-5z" fill="#2d3842"/><path d="M-5 4h78v5H-5z" fill="#aab2b8"/><path d="M-5 9h78v3H-5z" fill="#4b5660"/><path d="M0 18h14M4 24h24M4 30h18M8 36h36M8 42h28M4 48h20M4 54h26" stroke="#6f8f9c" stroke-width="1"/><rect x="46" y="46" width="26" height="26" rx="6" fill="#444"/><use href="#subl" x="52" y="50" width="14" height="18"/></svg></button>
  <button aria-label="Chrome window"><svg viewBox="0 0 68 68"><path d="M-4-5h76v78H-4z" fill="#fdfdfd"/><path d="M-4-5h76v6H-4z" fill="#d9cdf5"/><path d="M-2 6h12" stroke="#8a2a4a" stroke-width="3"/><path d="M-2 14h10M-2 22h20M-2 28h20M-2 34h20M-2 40h20M-2 46h20M-2 52h20M-2 58h20M-2 64h20M-2 69h20" stroke="#c08aa0" stroke-width="1.500"/><rect x="46" y="46" width="26" height="26" rx="6" fill="#fff"/><use href="#chrome" x="48" y="48" width="22" height="22"/></svg></button>
  <button aria-label="Bin"><svg viewBox="0 0 68 68"><path d="M6 4L16-5l8 5 8-6 10 5 10-3 9 8-4 12H10z" fill="#f2f2f2"/><path d="M14 2l8 8M28-2l4 12M40 0l-4 10M52 2l-8 8" stroke="#777" stroke-width="2"/><path d="M46-2l6 4-6 5z" fill="#3a6fb0"/><path d="M24 4l6-3v8z" fill="#3f8a4a"/><path d="M5 5q29 9 58 0l-7 62q-1 5-6 5H18q-5 0-6-5z" fill="#dfe2e4" fill-opacity=".95"/><path d="M5 5q29 9 58 0" fill="none" stroke="#fff" stroke-width="2"/></svg></button>
</footer>
</body>
</html>
